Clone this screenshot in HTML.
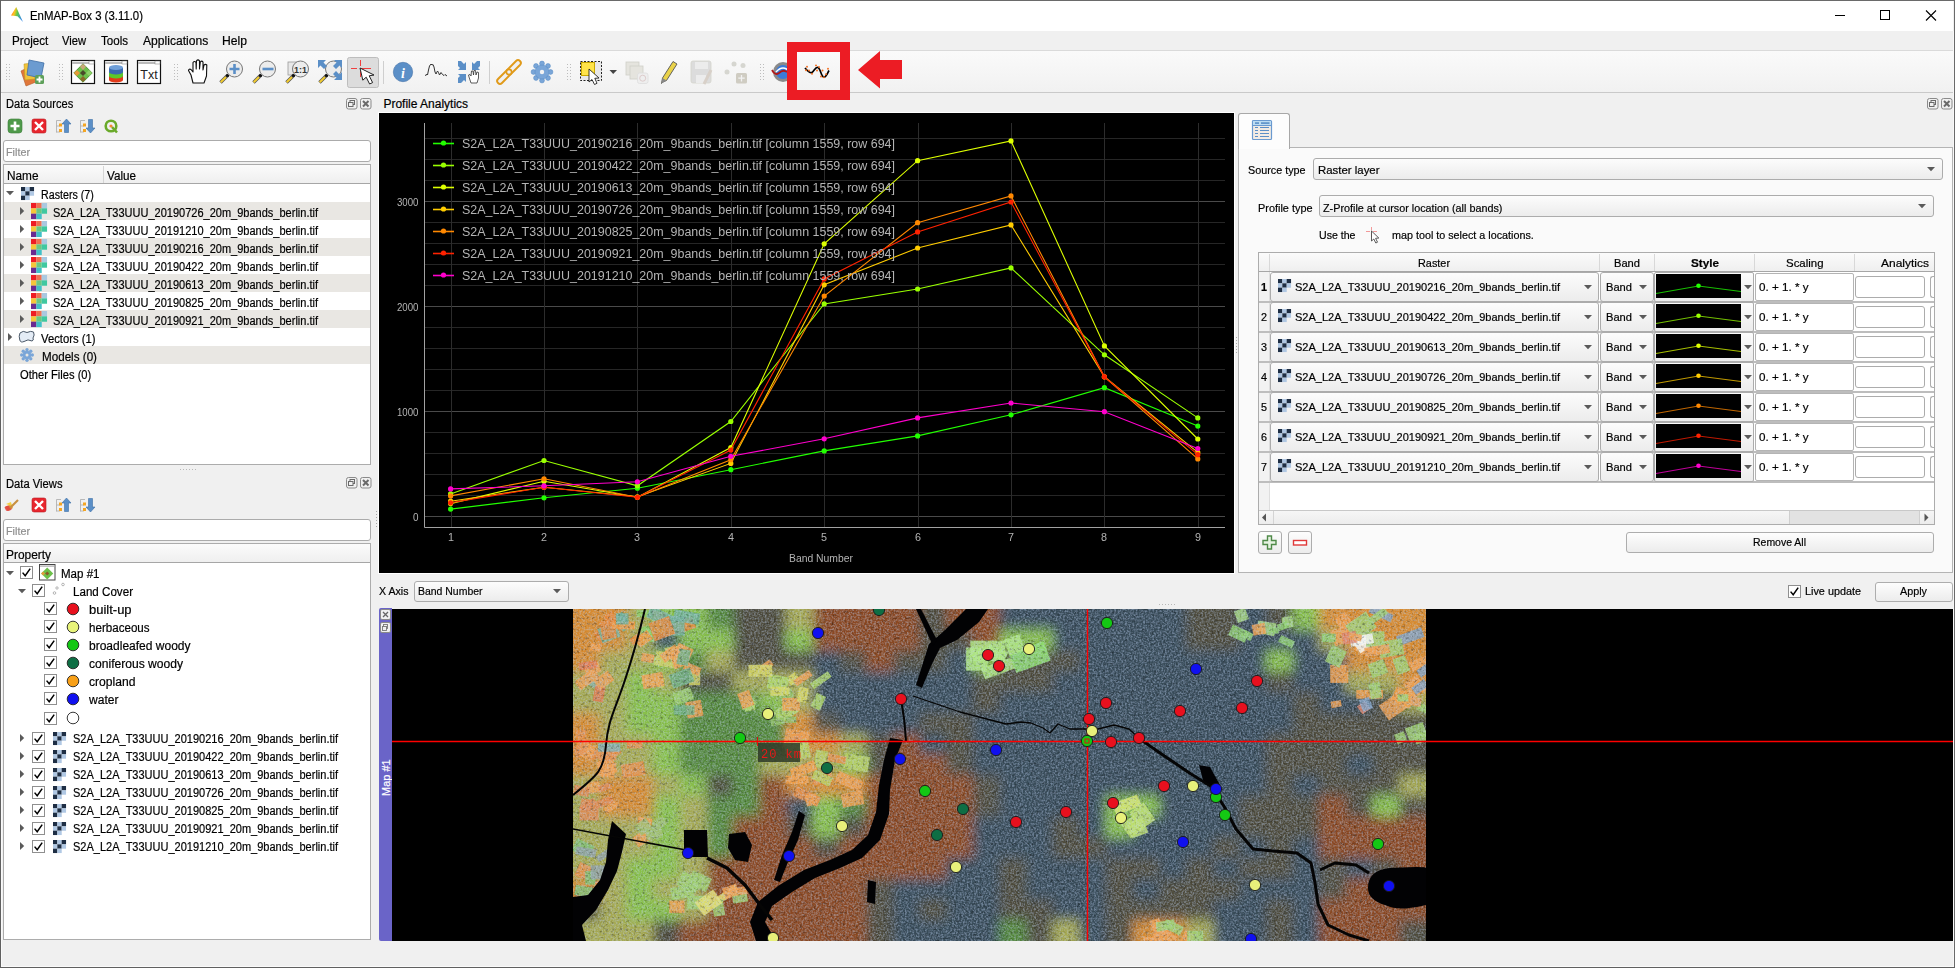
<!DOCTYPE html><html><head><meta charset="utf-8"><title>EnMAP-Box</title><style>
*{box-sizing:border-box}
html,body{margin:0;padding:0}
body{width:1955px;height:968px;overflow:hidden;position:relative;background:#f0f0f0;font-family:"Liberation Sans",sans-serif;font-size:12px;color:#000}
.a{position:absolute}
.t{position:absolute;white-space:nowrap;line-height:1;transform-origin:0 0;-webkit-text-stroke:0.2px currentColor}
svg{position:absolute;overflow:visible}
</style></head><body><div class="a" style="left:0px;top:0px;width:1955px;height:1px;background:#6a6a6a;"></div><div class="a" style="left:0px;top:0px;width:1px;height:968px;background:#606060;"></div><div class="a" style="left:1px;top:1px;width:1px;height:966px;background:#fafafa;"></div><div class="a" style="left:1954px;top:0px;width:1px;height:968px;background:#6a6a6a;"></div><div class="a" style="left:1953px;top:31px;width:1px;height:936px;background:#f8f8f8;"></div><div class="a" style="left:0px;top:967px;width:1955px;height:1px;background:#606060;"></div><div class="a" style="left:1px;top:966px;width:1953px;height:1px;background:#fafafa;"></div><div class="a" style="left:1px;top:1px;width:1952px;height:30px;background:#ffffff;"></div><svg class="a" style="left:0;top:0" width="40" height="32" viewBox="0 0 40 32"><defs><linearGradient id="lg0" x1="0" y1="0" x2="1" y2="0.3"><stop offset="0" stop-color="#ff5a1e"/><stop offset="0.35" stop-color="#ffc21e"/><stop offset="0.6" stop-color="#5cc84a"/><stop offset="1" stop-color="#3a8ee6"/></linearGradient></defs><path d="M16.2 7 L11 15.4 L17.5 16.2 L23 22 Z" fill="url(#lg0)"/></svg><div class="t" style="left:30.00px;top:10.04px;font-size:12px;color:#000;font-weight:normal;;transform:scaleX(0.9482)">EnMAP-Box 3 (3.11.0)</div><div class="a" style="left:1835px;top:15px;width:10px;height:1px;background:#000;"></div><svg class="a" style="left:0;top:0" width="1955" height="32"><rect x="1880.5" y="10.5" width="9" height="9" fill="none" stroke="#000" stroke-width="1"/><path d="M1926 10.5 L1936 20.5 M1936 10.5 L1926 20.5" stroke="#000" stroke-width="1.1"/></svg><div class="a" style="left:1px;top:31px;width:1952px;height:19px;background:#f0f0f0;"></div><div class="t" style="left:11.50px;top:35.44px;font-size:12px;color:#000;font-weight:normal;;transform:scaleX(0.9716)">Project</div><div class="t" style="left:62.00px;top:35.44px;font-size:12px;color:#000;font-weight:normal;;transform:scaleX(0.9303)">View</div><div class="t" style="left:101.00px;top:35.44px;font-size:12px;color:#000;font-weight:normal;;transform:scaleX(0.9637)">Tools</div><div class="t" style="left:142.50px;top:35.44px;font-size:12px;color:#000;font-weight:normal;;transform:scaleX(1.0074)">Applications</div><div class="t" style="left:221.50px;top:35.44px;font-size:12px;color:#000;font-weight:normal;;transform:scaleX(1.0127)">Help</div><div class="a" style="left:1px;top:50px;width:1952px;height:1px;background:#dadada;"></div><div class="a" style="left:1px;top:51px;width:1952px;height:41px;background:linear-gradient(#fafafa,#f1f1f1)"></div><div class="a" style="left:1px;top:92px;width:1952px;height:1px;background:#c9c9c9;"></div><svg class="a" style="left:0;top:0" width="960" height="110" viewBox="0 0 960 110"><rect x="6.0" y="64" width="1" height="1" fill="#bdbdbd"/><rect x="6.0" y="67" width="1" height="1" fill="#bdbdbd"/><rect x="6.0" y="70" width="1" height="1" fill="#bdbdbd"/><rect x="6.0" y="73" width="1" height="1" fill="#bdbdbd"/><rect x="6.0" y="76" width="1" height="1" fill="#bdbdbd"/><rect x="6.0" y="79" width="1" height="1" fill="#bdbdbd"/><rect x="9.0" y="64" width="1" height="1" fill="#bdbdbd"/><rect x="9.0" y="67" width="1" height="1" fill="#bdbdbd"/><rect x="9.0" y="70" width="1" height="1" fill="#bdbdbd"/><rect x="9.0" y="73" width="1" height="1" fill="#bdbdbd"/><rect x="9.0" y="76" width="1" height="1" fill="#bdbdbd"/><rect x="9.0" y="79" width="1" height="1" fill="#bdbdbd"/><rect x="59.0" y="64" width="1" height="1" fill="#bdbdbd"/><rect x="59.0" y="67" width="1" height="1" fill="#bdbdbd"/><rect x="59.0" y="70" width="1" height="1" fill="#bdbdbd"/><rect x="59.0" y="73" width="1" height="1" fill="#bdbdbd"/><rect x="59.0" y="76" width="1" height="1" fill="#bdbdbd"/><rect x="59.0" y="79" width="1" height="1" fill="#bdbdbd"/><rect x="62.0" y="64" width="1" height="1" fill="#bdbdbd"/><rect x="62.0" y="67" width="1" height="1" fill="#bdbdbd"/><rect x="62.0" y="70" width="1" height="1" fill="#bdbdbd"/><rect x="62.0" y="73" width="1" height="1" fill="#bdbdbd"/><rect x="62.0" y="76" width="1" height="1" fill="#bdbdbd"/><rect x="62.0" y="79" width="1" height="1" fill="#bdbdbd"/><rect x="174.0" y="64" width="1" height="1" fill="#bdbdbd"/><rect x="174.0" y="67" width="1" height="1" fill="#bdbdbd"/><rect x="174.0" y="70" width="1" height="1" fill="#bdbdbd"/><rect x="174.0" y="73" width="1" height="1" fill="#bdbdbd"/><rect x="174.0" y="76" width="1" height="1" fill="#bdbdbd"/><rect x="174.0" y="79" width="1" height="1" fill="#bdbdbd"/><rect x="177.0" y="64" width="1" height="1" fill="#bdbdbd"/><rect x="177.0" y="67" width="1" height="1" fill="#bdbdbd"/><rect x="177.0" y="70" width="1" height="1" fill="#bdbdbd"/><rect x="177.0" y="73" width="1" height="1" fill="#bdbdbd"/><rect x="177.0" y="76" width="1" height="1" fill="#bdbdbd"/><rect x="177.0" y="79" width="1" height="1" fill="#bdbdbd"/><rect x="567.0" y="64" width="1" height="1" fill="#bdbdbd"/><rect x="567.0" y="67" width="1" height="1" fill="#bdbdbd"/><rect x="567.0" y="70" width="1" height="1" fill="#bdbdbd"/><rect x="567.0" y="73" width="1" height="1" fill="#bdbdbd"/><rect x="567.0" y="76" width="1" height="1" fill="#bdbdbd"/><rect x="567.0" y="79" width="1" height="1" fill="#bdbdbd"/><rect x="570.0" y="64" width="1" height="1" fill="#bdbdbd"/><rect x="570.0" y="67" width="1" height="1" fill="#bdbdbd"/><rect x="570.0" y="70" width="1" height="1" fill="#bdbdbd"/><rect x="570.0" y="73" width="1" height="1" fill="#bdbdbd"/><rect x="570.0" y="76" width="1" height="1" fill="#bdbdbd"/><rect x="570.0" y="79" width="1" height="1" fill="#bdbdbd"/><rect x="760.0" y="64" width="1" height="1" fill="#bdbdbd"/><rect x="760.0" y="67" width="1" height="1" fill="#bdbdbd"/><rect x="760.0" y="70" width="1" height="1" fill="#bdbdbd"/><rect x="760.0" y="73" width="1" height="1" fill="#bdbdbd"/><rect x="760.0" y="76" width="1" height="1" fill="#bdbdbd"/><rect x="760.0" y="79" width="1" height="1" fill="#bdbdbd"/><rect x="763.0" y="64" width="1" height="1" fill="#bdbdbd"/><rect x="763.0" y="67" width="1" height="1" fill="#bdbdbd"/><rect x="763.0" y="70" width="1" height="1" fill="#bdbdbd"/><rect x="763.0" y="73" width="1" height="1" fill="#bdbdbd"/><rect x="763.0" y="76" width="1" height="1" fill="#bdbdbd"/><rect x="763.0" y="79" width="1" height="1" fill="#bdbdbd"/><g><path d="M21 71 L31 66 L36 82 L26 86 Z" fill="#e0773a" stroke="#b25a28" stroke-width="0.6"/><path d="M24 64 L34 63 L35 79 L25 80 Z" fill="#f2c43a" stroke="#c09a20" stroke-width="0.6"/><path d="M29 60 L44 63 L41 78 L27 75 Z" fill="#6b9bd0" stroke="#3f6fa6" stroke-width="0.8"/><rect x="35" y="75" width="9" height="9" rx="1.5" fill="#5ea05a"/><path d="M39.5 76.5 V82.5 M36.5 79.5 H42.5" stroke="#fff" stroke-width="1.8"/></g><rect x="71.5" y="60.5" width="23" height="23" fill="#fff" stroke="#111" stroke-width="1.2"/><rect x="72" y="62" width="22" height="2" fill="#bbb"/><rect x="89" y="61" width="5" height="3" fill="#fff" stroke="#777" stroke-width="0.5"/><g transform="translate(83 73) rotate(45)"><rect x="-6.5" y="-6.5" width="13" height="13" fill="#6cc04a" stroke="#3e8a2a" stroke-width="0.8"/><rect x="-6.5" y="-6.5" width="4.3" height="4.3" fill="#c8a878"/><rect x="-2.2" y="-2.2" width="4.3" height="4.3" fill="#4a4a2a"/><rect x="2.1" y="2.1" width="4.3" height="4.3" fill="#8a6a2a"/><rect x="-6.5" y="2.1" width="4.3" height="4.3" fill="#e59b3a"/><rect x="2.1" y="-6.5" width="4.3" height="4.3" fill="#8fd06a"/></g><rect x="104.5" y="60.5" width="23" height="23" fill="#fff" stroke="#111" stroke-width="1.2"/><rect x="105" y="62" width="22" height="2" fill="#bbb"/><rect x="122" y="61" width="5" height="3" fill="#fff" stroke="#777" stroke-width="0.5"/><ellipse cx="116" cy="80" rx="7" ry="2.5" fill="#e23a1a"/><rect x="109" y="76" width="14" height="4" fill="#e23a1a"/><ellipse cx="116" cy="76" rx="7" ry="2.5" fill="#5cc82a"/><rect x="109" y="72" width="14" height="4" fill="#5cc82a"/><ellipse cx="116" cy="72" rx="7" ry="2.5" fill="#3a6ab0"/><rect x="109" y="68" width="14" height="4" fill="#3a6ab0"/><ellipse cx="116" cy="67.5" rx="7" ry="2.5" fill="#6f9fd8"/><rect x="137.5" y="60.5" width="23" height="23" fill="#fff" stroke="#111" stroke-width="1.2"/><rect x="138" y="62" width="22" height="2" fill="#bbb"/><rect x="155" y="61" width="5" height="3" fill="#fff" stroke="#777" stroke-width="0.5"/><text x="149" y="79" font-family="Liberation Sans" font-size="12.5" text-anchor="middle" fill="#222">Txt</text><path d="M193 83 L191 75 L188.5 70.5 Q189 68.5 191 69.5 L193 72 L193 62.5 Q194.5 60.5 196 62.5 L196.2 69 L196.5 60.8 Q198 59 199.5 60.8 L199.5 69 L200.3 62 Q201.8 60.3 203 62 L203 70 L204 65 Q205.5 63.8 206.8 65 L206.5 76 L204 83 Z" fill="#fff" stroke="#111" stroke-width="1.1" stroke-linejoin="round"/><path d="M220.5 82.5 L228 75" stroke="#555" stroke-width="3.4" stroke-linecap="butt"/><path d="M220.7 82.3 L226 77" stroke="#f2cc30" stroke-width="2" stroke-linecap="butt"/><circle cx="227.5" cy="75.5" r="1.6" fill="#111"/><circle cx="234.5" cy="69" r="8" fill="#ececec" stroke="#777" stroke-width="1"/><path d="M234.5 3 V13 M229.5 8 H239.5" transform="translate(0 61)" stroke="#5b8fc7" stroke-width="2.6"/><path d="M253.5 82.5 L261 75" stroke="#555" stroke-width="3.4" stroke-linecap="butt"/><path d="M253.7 82.3 L259 77" stroke="#f2cc30" stroke-width="2" stroke-linecap="butt"/><circle cx="260.5" cy="75.5" r="1.6" fill="#111"/><circle cx="267.5" cy="69" r="8" fill="#ececec" stroke="#777" stroke-width="1"/><path d="M262.5 69 H273.5" stroke="#5b8fc7" stroke-width="2.6"/><rect x="288" y="62" width="10" height="13" fill="#e8e8e8" stroke="#999" stroke-width="0.8"/><path d="M286.5 82.5 L294 75" stroke="#555" stroke-width="3.4" stroke-linecap="butt"/><path d="M286.7 82.3 L292 77" stroke="#f2cc30" stroke-width="2" stroke-linecap="butt"/><circle cx="293.5" cy="75.5" r="1.6" fill="#111"/><circle cx="300.5" cy="69" r="8" fill="#ececec" stroke="#777" stroke-width="1"/><text x="300.5" y="72.8" font-family="Liberation Sans" font-weight="bold" font-size="9" text-anchor="middle" fill="#333">1:1</text><path d="M319.5 82.5 L327 75" stroke="#555" stroke-width="3.4" stroke-linecap="butt"/><path d="M319.7 82.3 L325 77" stroke="#f2cc30" stroke-width="2" stroke-linecap="butt"/><circle cx="326.5" cy="75.5" r="1.6" fill="#111"/><circle cx="333.5" cy="69" r="8" fill="#ececec" stroke="#777" stroke-width="1"/><path d="M318 60 H326 L323.5 62.5 L327 66 L324 69 L320.5 65.5 L318 68 Z" fill="#5b8fc7"/><path d="M342 60 H334 L336.5 62.5 L333 66 L336 69 L339.5 65.5 L342 68 Z" fill="#5b8fc7"/><path d="M342 80 H334 L336.5 77.5 L333 74 L336 71 L339.5 74.5 L342 72 Z" fill="#5b8fc7"/><rect x="347.5" y="57.5" width="31" height="30" rx="2" fill="#dcdcdc" stroke="#bdbdbd" stroke-width="1"/><path d="M351 68.5 H357 M360 68.5 H371 M360.5 60 V66 M360.5 71 V77" stroke="#f04040" stroke-width="1"/><path d="M360 68 L362.8 80.2 L366.2 77.2 L369.6 84 L372.6 82.6 L369.2 75.8 L374 75 Z" fill="#fff" stroke="#222" stroke-width="1" stroke-linejoin="round"/><rect x="383" y="61" width="1" height="23" fill="#cfcfcf"/><rect x="489" y="61" width="1" height="23" fill="#cfcfcf"/><circle cx="403" cy="72" r="9.7" fill="#5b8fc7" stroke="#4572a8" stroke-width="0.6"/><text x="403" y="77.5" font-family="Liberation Serif" font-style="italic" font-weight="bold" font-size="14" text-anchor="middle" fill="#fff">i</text><path d="M425.5 76 L426.5 74 L427.5 75 L428.5 70 L429.5 66 L431 64 L432 65 L433 64.5 L434 67 L435 72 L436 74 L437.5 71 L438.5 72.5 L439.5 75 L441 72.5 L442.5 74.5 L444 75.5 L445 74.5 L447 76" fill="none" stroke="#333" stroke-width="1"/><path d="M458 61 L461 61 L464 64 L466 62 L466 70 L458 70 L460 68 L458 66 Z" fill="#5b8fc7"/><path d="M480 61 L477 61 L474 64 L472 62 L472 70 L480 70 L478 68 L480 66 Z" fill="#5b8fc7"/><path d="M458 83 L461 83 L464 80 L466 82 L466 74 L458 74 L460 76 L458 78 Z" fill="#5b8fc7"/><path d="M471 83 L469 77 L468.5 75 L470 74.5 L471 76 L471.5 71 L473 71 L473.5 75 L474 70.5 L475.5 70.5 L476 75 L477 72 L478.5 72.5 L478.5 78 L477 83 Z" fill="#fff" stroke="#333" stroke-width="0.8"/><path d="M500 81 L518 63" stroke="#e09a1a" stroke-width="7.5" stroke-linecap="round"/><path d="M500 81 L518 63" stroke="#f1f1f1" stroke-width="3.6" stroke-linecap="round"/><circle cx="509" cy="72" r="2.6" fill="#f1f1f1" stroke="#e09a1a" stroke-width="1.6"/><circle cx="550.50" cy="72.00" r="2.4" fill="#7aa6d8" stroke="#5b8fc7" stroke-width="0.6"/><circle cx="548.01" cy="78.01" r="2.4" fill="#7aa6d8" stroke="#5b8fc7" stroke-width="0.6"/><circle cx="542.00" cy="80.50" r="2.4" fill="#7aa6d8" stroke="#5b8fc7" stroke-width="0.6"/><circle cx="535.99" cy="78.01" r="2.4" fill="#7aa6d8" stroke="#5b8fc7" stroke-width="0.6"/><circle cx="533.50" cy="72.00" r="2.4" fill="#7aa6d8" stroke="#5b8fc7" stroke-width="0.6"/><circle cx="535.99" cy="65.99" r="2.4" fill="#7aa6d8" stroke="#5b8fc7" stroke-width="0.6"/><circle cx="542.00" cy="63.50" r="2.4" fill="#7aa6d8" stroke="#5b8fc7" stroke-width="0.6"/><circle cx="548.01" cy="65.99" r="2.4" fill="#7aa6d8" stroke="#5b8fc7" stroke-width="0.6"/><circle cx="542" cy="72" r="7" fill="#7aa6d8" stroke="#5b8fc7" stroke-width="0.6"/><circle cx="542" cy="72" r="2.2" fill="#f3f3f3"/><rect x="580.5" y="61.5" width="21" height="19" fill="#e8e8e8" stroke="#222" stroke-width="1" stroke-dasharray="2 1.5"/><rect x="581.5" y="62.5" width="13" height="13" fill="#ffe44a" stroke="#c9a800" stroke-width="1"/><path d="M589 69 L589 82 L592 79.5 L594.5 84.5 L597 83.3 L594.8 78.3 L599 78 Z" fill="#fff" stroke="#222" stroke-width="0.9" stroke-linejoin="round"/><path d="M609.5 70 H617 L613.2 74 Z" fill="#444"/><rect x="626" y="62" width="13" height="13" fill="#e5e4de" stroke="#cfcfc8" stroke-width="0.8"/><rect x="630" y="66" width="13" height="13" fill="#e5e4de" stroke="#cfcfc8" stroke-width="0.8"/><rect x="637.5" y="73" width="10.5" height="10.5" rx="2" fill="#eee" stroke="#ddd" stroke-width="0.8"/><circle cx="642.7" cy="78.2" r="3" fill="none" stroke="#dcc" stroke-width="1"/><path d="M663 82 L661.5 83.5 L662.5 78 L673 61.5 L677 64 L666.5 80.5 Z" fill="#e9d24a" stroke="#555" stroke-width="0.9" stroke-linejoin="round"/><path d="M661.5 83.5 L662.5 78 L666.5 80.5 Z" fill="#888"/><rect x="691" y="61" width="20" height="22" rx="2" fill="#dcdcdc" stroke="#d4d4cc" stroke-width="0.8"/><rect x="695" y="62" width="13" height="7" fill="#ececec"/><rect x="696" y="75" width="10" height="8" fill="#ececec"/><path d="M704 84 L711 70" stroke="#d8d0c8" stroke-width="3"/><circle cx="734" cy="64" r="2.5" fill="#d6d6d0"/><circle cx="743" cy="65.5" r="2.5" fill="#d6d6d0"/><circle cx="727" cy="72" r="2.5" fill="#d6d6d0"/><rect x="736" y="73" width="11" height="10.5" rx="1.5" fill="#cfccc2"/><path d="M741.5 75 V81.5 M738.3 78.2 H744.7" stroke="#f2f2f2" stroke-width="1.3"/><circle cx="783" cy="72" r="10" fill="#8a8a8a"/><circle cx="783" cy="72" r="7" fill="#3a7ad8"/><path d="M776 72 Q783 64 790 72" stroke="#fff" stroke-width="1.5" fill="none"/><path d="M772 70 Q775 76 779 73 Q783 69 787 72" stroke="#b01818" stroke-width="1.8" fill="none"/><rect x="792" y="47" width="53" height="48" fill="none" stroke="#ec1c24" stroke-width="10"/><path d="M805 68 C808 71.5 810 73.5 812 72.5 S815.5 66.5 818 67.5 S821 76 823.5 77 S827.5 73 829 70.5" fill="none" stroke="#000" stroke-width="1.7"/><circle cx="807" cy="66.8" r="0.95" fill="#f26a1a"/><circle cx="809" cy="70.5" r="0.95" fill="#f26a1a"/><circle cx="812" cy="73.8" r="0.95" fill="#f26a1a"/><circle cx="816" cy="65.4" r="0.95" fill="#f26a1a"/><circle cx="819" cy="67" r="0.95" fill="#f26a1a"/><circle cx="817" cy="70.5" r="0.95" fill="#f26a1a"/><circle cx="822.5" cy="70.5" r="0.95" fill="#f26a1a"/><circle cx="824" cy="77.2" r="0.95" fill="#f26a1a"/><circle cx="826" cy="74.2" r="0.95" fill="#f26a1a"/><circle cx="828" cy="68.7" r="0.95" fill="#f26a1a"/><circle cx="821" cy="76.5" r="0.95" fill="#f26a1a"/><circle cx="806" cy="70.2" r="0.95" fill="#f26a1a"/><path d="M858 70 L880 51 L880 60 L902 60 L902 79 L880 79 L880 88.6 Z" fill="#ec1c24"/></svg><div class="t" style="left:5.50px;top:98.44px;font-size:12px;color:#000;font-weight:normal;;transform:scaleX(0.9243)">Data Sources</div><svg class="a" style="left:346px;top:98px" width="26" height="12" viewBox="0 0 26 12"><rect x="0.5" y="0.5" width="10.5" height="10.5" rx="2" fill="none" stroke="#8a8a8a" stroke-width="1"/><rect x="4" y="2.5" width="4.5" height="4" fill="none" stroke="#6a6a6a" stroke-width="1"/><rect x="2.5" y="4.5" width="4.5" height="4" fill="#f0f0f0" stroke="#6a6a6a" stroke-width="1"/><rect x="14.5" y="0.5" width="10.5" height="10.5" rx="2" fill="none" stroke="#8a8a8a" stroke-width="1"/><path d="M17 3 L22.5 8.5 M22.5 3 L17 8.5" stroke="#6a6a6a" stroke-width="2"/></svg><svg class="a" style="left:0;top:119px" width="130" height="16" viewBox="0 0 130 16"><rect x="8" y="0" width="14" height="14" rx="3" fill="#4f9a4a" stroke="#3d7d3a" stroke-width="0.6"/><path d="M15 2.5 V11.5 M10.5 7 H19.5" stroke="#fff" stroke-width="2.6"/><rect x="32" y="0" width="14" height="14" rx="2" fill="#e8262e" stroke="#b81a20" stroke-width="0.6"/><path d="M35 3 L43 11 M43 3 L35 11" stroke="#fff" stroke-width="2.4"/><path d="M56.5 1.5 H61 M56.5 1.5 V13.5 M56.5 7 H60 M56.5 13 H60" stroke="#aaa" stroke-width="0.8" fill="none"/><rect x="59" y="4.5" width="3" height="3" fill="#f5a623"/><rect x="59" y="10" width="3" height="3" fill="#f5a623"/><path d="M66.5 0 L71 5 H68.5 V13.5 H64.5 V5 H62 Z" fill="#5b8fc7" stroke="#3d6fa6" stroke-width="0.6"/><path d="M80.5 1.5 H85 M80.5 1.5 V13.5 M80.5 7 H84 M80.5 13 H84" stroke="#aaa" stroke-width="0.8" fill="none"/><rect x="83" y="4.5" width="3" height="3" fill="#f5a623"/><rect x="83" y="10" width="3" height="3" fill="#f5a623"/><path d="M90.5 14 L95 9 H92.5 V0.5 H88.5 V9 H86 Z" fill="#5b8fc7" stroke="#3d6fa6" stroke-width="0.6"/><circle cx="111" cy="7" r="5.3" fill="none" stroke="#6aaa2a" stroke-width="2.6"/><path d="M112 8 L117 13.5" stroke="#6aaa2a" stroke-width="2.6"/><circle cx="111" cy="7" r="1.6" fill="#f08a30"/></svg><div class="a" style="left:3px;top:140px;width:368px;height:22px;background:#fff;border:1px solid #ababab;border-radius:3px"></div><div class="t" style="left:5.50px;top:147.19px;font-size:11px;color:#8f8f8f;font-weight:normal;;transform:scaleX(0.9815)">Filter</div><div class="a" style="left:3px;top:164px;width:368px;height:301px;background:#fff;border:1px solid #acacac"></div><div class="a" style="left:4px;top:165px;width:366px;height:19px;background:linear-gradient(#fbfbfb,#efefef);border-bottom:1px solid #a6a6a6"></div><div class="a" style="left:103px;top:166px;width:1px;height:17px;background:#d5d5d5;"></div><div class="t" style="left:6.60px;top:169.84px;font-size:12px;color:#000;font-weight:normal;;transform:scaleX(0.9839)">Name</div><div class="t" style="left:106.50px;top:169.84px;font-size:12px;color:#000;font-weight:normal;;transform:scaleX(0.9727)">Value</div><svg class="a" style="left:6px;top:190.8px" width="9" height="6"><path d="M0 0 H8 L4 4.2 Z" fill="#5a5a5a"/></svg><svg class="a" style="left:21px;top:187px" width="13" height="13"><rect x="0.00" y="0.00" width="4.38" height="4.38" fill="#1e2e44"/><rect x="4.33" y="0.00" width="4.38" height="4.38" fill="#b0c8e4"/><rect x="8.67" y="0.00" width="4.38" height="4.38" fill="#1e2e44"/><rect x="0.00" y="4.33" width="4.38" height="4.38" fill="#b0c8e4"/><rect x="4.33" y="4.33" width="4.38" height="4.38" fill="#1e2e44"/><rect x="8.67" y="4.33" width="4.38" height="4.38" fill="#b0c8e4"/><rect x="0.00" y="8.67" width="4.38" height="4.38" fill="#1e2e44"/><rect x="4.33" y="8.67" width="4.38" height="4.38" fill="#b0c8e4"/></svg><div class="t" style="left:41.20px;top:189.14px;font-size:12px;color:#000;font-weight:normal;;transform:scaleX(0.8897)">Rasters (7)</div><div class="a" style="left:4px;top:202px;width:366px;height:18px;background:#e9e7e3;"></div><svg class="a" style="left:20px;top:207.3px" width="6" height="9"><path d="M0 0 V8 L4.2 4 Z" fill="#5a5a5a"/></svg><svg class="a" style="left:31px;top:203.2px" width="16" height="16"><rect x="0.00" y="0.00" width="5.4" height="5.4" fill="#ee1c24"/><rect x="5.33" y="0.00" width="5.4" height="5.4" fill="#f07050"/><rect x="10.66" y="0.00" width="5.4" height="5.4" fill="#aac8e0"/><rect x="0.00" y="5.33" width="5.4" height="5.4" fill="#f5c63a"/><rect x="5.33" y="5.33" width="5.4" height="5.4" fill="#6cc880"/><rect x="10.66" y="5.33" width="5.4" height="5.4" fill="#40c8a0"/><rect x="0.00" y="10.66" width="5.4" height="5.4" fill="#6a2a90"/><rect x="5.33" y="10.66" width="5.4" height="5.4" fill="#40c0c8"/></svg><div class="t" style="left:53.30px;top:207.14px;font-size:12px;color:#000;font-weight:normal;;transform:scaleX(0.9174)">S2A_L2A_T33UUU_20190726_20m_9bands_berlin.tif</div><svg class="a" style="left:20px;top:225.3px" width="6" height="9"><path d="M0 0 V8 L4.2 4 Z" fill="#5a5a5a"/></svg><svg class="a" style="left:31px;top:221.2px" width="16" height="16"><rect x="0.00" y="0.00" width="5.4" height="5.4" fill="#ee1c24"/><rect x="5.33" y="0.00" width="5.4" height="5.4" fill="#f07050"/><rect x="10.66" y="0.00" width="5.4" height="5.4" fill="#aac8e0"/><rect x="0.00" y="5.33" width="5.4" height="5.4" fill="#f5c63a"/><rect x="5.33" y="5.33" width="5.4" height="5.4" fill="#6cc880"/><rect x="10.66" y="5.33" width="5.4" height="5.4" fill="#40c8a0"/><rect x="0.00" y="10.66" width="5.4" height="5.4" fill="#6a2a90"/><rect x="5.33" y="10.66" width="5.4" height="5.4" fill="#40c0c8"/></svg><div class="t" style="left:53.30px;top:225.14px;font-size:12px;color:#000;font-weight:normal;;transform:scaleX(0.9174)">S2A_L2A_T33UUU_20191210_20m_9bands_berlin.tif</div><div class="a" style="left:4px;top:238px;width:366px;height:18px;background:#e9e7e3;"></div><svg class="a" style="left:20px;top:243.3px" width="6" height="9"><path d="M0 0 V8 L4.2 4 Z" fill="#5a5a5a"/></svg><svg class="a" style="left:31px;top:239.2px" width="16" height="16"><rect x="0.00" y="0.00" width="5.4" height="5.4" fill="#ee1c24"/><rect x="5.33" y="0.00" width="5.4" height="5.4" fill="#f07050"/><rect x="10.66" y="0.00" width="5.4" height="5.4" fill="#aac8e0"/><rect x="0.00" y="5.33" width="5.4" height="5.4" fill="#f5c63a"/><rect x="5.33" y="5.33" width="5.4" height="5.4" fill="#6cc880"/><rect x="10.66" y="5.33" width="5.4" height="5.4" fill="#40c8a0"/><rect x="0.00" y="10.66" width="5.4" height="5.4" fill="#6a2a90"/><rect x="5.33" y="10.66" width="5.4" height="5.4" fill="#40c0c8"/></svg><div class="t" style="left:53.30px;top:243.14px;font-size:12px;color:#000;font-weight:normal;;transform:scaleX(0.9174)">S2A_L2A_T33UUU_20190216_20m_9bands_berlin.tif</div><svg class="a" style="left:20px;top:261.3px" width="6" height="9"><path d="M0 0 V8 L4.2 4 Z" fill="#5a5a5a"/></svg><svg class="a" style="left:31px;top:257.2px" width="16" height="16"><rect x="0.00" y="0.00" width="5.4" height="5.4" fill="#ee1c24"/><rect x="5.33" y="0.00" width="5.4" height="5.4" fill="#f07050"/><rect x="10.66" y="0.00" width="5.4" height="5.4" fill="#aac8e0"/><rect x="0.00" y="5.33" width="5.4" height="5.4" fill="#f5c63a"/><rect x="5.33" y="5.33" width="5.4" height="5.4" fill="#6cc880"/><rect x="10.66" y="5.33" width="5.4" height="5.4" fill="#40c8a0"/><rect x="0.00" y="10.66" width="5.4" height="5.4" fill="#6a2a90"/><rect x="5.33" y="10.66" width="5.4" height="5.4" fill="#40c0c8"/></svg><div class="t" style="left:53.30px;top:261.14px;font-size:12px;color:#000;font-weight:normal;;transform:scaleX(0.9174)">S2A_L2A_T33UUU_20190422_20m_9bands_berlin.tif</div><div class="a" style="left:4px;top:274px;width:366px;height:18px;background:#e9e7e3;"></div><svg class="a" style="left:20px;top:279.3px" width="6" height="9"><path d="M0 0 V8 L4.2 4 Z" fill="#5a5a5a"/></svg><svg class="a" style="left:31px;top:275.2px" width="16" height="16"><rect x="0.00" y="0.00" width="5.4" height="5.4" fill="#ee1c24"/><rect x="5.33" y="0.00" width="5.4" height="5.4" fill="#f07050"/><rect x="10.66" y="0.00" width="5.4" height="5.4" fill="#aac8e0"/><rect x="0.00" y="5.33" width="5.4" height="5.4" fill="#f5c63a"/><rect x="5.33" y="5.33" width="5.4" height="5.4" fill="#6cc880"/><rect x="10.66" y="5.33" width="5.4" height="5.4" fill="#40c8a0"/><rect x="0.00" y="10.66" width="5.4" height="5.4" fill="#6a2a90"/><rect x="5.33" y="10.66" width="5.4" height="5.4" fill="#40c0c8"/></svg><div class="t" style="left:53.30px;top:279.14px;font-size:12px;color:#000;font-weight:normal;;transform:scaleX(0.9174)">S2A_L2A_T33UUU_20190613_20m_9bands_berlin.tif</div><svg class="a" style="left:20px;top:297.3px" width="6" height="9"><path d="M0 0 V8 L4.2 4 Z" fill="#5a5a5a"/></svg><svg class="a" style="left:31px;top:293.2px" width="16" height="16"><rect x="0.00" y="0.00" width="5.4" height="5.4" fill="#ee1c24"/><rect x="5.33" y="0.00" width="5.4" height="5.4" fill="#f07050"/><rect x="10.66" y="0.00" width="5.4" height="5.4" fill="#aac8e0"/><rect x="0.00" y="5.33" width="5.4" height="5.4" fill="#f5c63a"/><rect x="5.33" y="5.33" width="5.4" height="5.4" fill="#6cc880"/><rect x="10.66" y="5.33" width="5.4" height="5.4" fill="#40c8a0"/><rect x="0.00" y="10.66" width="5.4" height="5.4" fill="#6a2a90"/><rect x="5.33" y="10.66" width="5.4" height="5.4" fill="#40c0c8"/></svg><div class="t" style="left:53.30px;top:297.14px;font-size:12px;color:#000;font-weight:normal;;transform:scaleX(0.9174)">S2A_L2A_T33UUU_20190825_20m_9bands_berlin.tif</div><div class="a" style="left:4px;top:310px;width:366px;height:18px;background:#e9e7e3;"></div><svg class="a" style="left:20px;top:315.3px" width="6" height="9"><path d="M0 0 V8 L4.2 4 Z" fill="#5a5a5a"/></svg><svg class="a" style="left:31px;top:311.2px" width="16" height="16"><rect x="0.00" y="0.00" width="5.4" height="5.4" fill="#ee1c24"/><rect x="5.33" y="0.00" width="5.4" height="5.4" fill="#f07050"/><rect x="10.66" y="0.00" width="5.4" height="5.4" fill="#aac8e0"/><rect x="0.00" y="5.33" width="5.4" height="5.4" fill="#f5c63a"/><rect x="5.33" y="5.33" width="5.4" height="5.4" fill="#6cc880"/><rect x="10.66" y="5.33" width="5.4" height="5.4" fill="#40c8a0"/><rect x="0.00" y="10.66" width="5.4" height="5.4" fill="#6a2a90"/><rect x="5.33" y="10.66" width="5.4" height="5.4" fill="#40c0c8"/></svg><div class="t" style="left:53.30px;top:315.14px;font-size:12px;color:#000;font-weight:normal;;transform:scaleX(0.9174)">S2A_L2A_T33UUU_20190921_20m_9bands_berlin.tif</div><svg class="a" style="left:8px;top:333.3px" width="6" height="9"><path d="M0 0 V8 L4.2 4 Z" fill="#5a5a5a"/></svg><svg class="a" style="left:18px;top:330px" width="18" height="14"><path d="M2 3 Q5 0 9 2.5 Q13 0.5 15.5 2 Q17 5 15 8 Q16 10.5 14 11 Q10 8.5 6 11.5 Q2.5 13 1.8 10 Q0.5 6 2 3 Z" fill="#e4ecf6" stroke="#4a5868" stroke-width="1"/></svg><div class="t" style="left:41.20px;top:333.14px;font-size:12px;color:#000;font-weight:normal;;transform:scaleX(0.9391)">Vectors (1)</div><div class="a" style="left:4px;top:346px;width:366px;height:18px;background:#e9e7e3;"></div><svg class="a" style="left:20px;top:348px" width="15" height="15"><circle cx="12.30" cy="7.00" r="1.7" fill="#7aa6d8"/><circle cx="10.75" cy="10.75" r="1.7" fill="#7aa6d8"/><circle cx="7.00" cy="12.30" r="1.7" fill="#7aa6d8"/><circle cx="3.25" cy="10.75" r="1.7" fill="#7aa6d8"/><circle cx="1.70" cy="7.00" r="1.7" fill="#7aa6d8"/><circle cx="3.25" cy="3.25" r="1.7" fill="#7aa6d8"/><circle cx="7.00" cy="1.70" r="1.7" fill="#7aa6d8"/><circle cx="10.75" cy="3.25" r="1.7" fill="#7aa6d8"/><circle cx="7" cy="7" r="4.3" fill="#7aa6d8"/><circle cx="7" cy="7" r="1.5" fill="#e9e7e3"/></svg><div class="t" style="left:41.50px;top:351.14px;font-size:12px;color:#000;font-weight:normal;;transform:scaleX(0.9702)">Models (0)</div><div class="t" style="left:19.70px;top:369.14px;font-size:12px;color:#000;font-weight:normal;;transform:scaleX(0.9297)">Other Files (0)</div><svg class="a" style="left:0;top:0" width="380" height="480"><rect x="180" y="469" width="1" height="1" fill="#b8b8b8"/><rect x="183" y="469" width="1" height="1" fill="#b8b8b8"/><rect x="186" y="469" width="1" height="1" fill="#b8b8b8"/><rect x="189" y="469" width="1" height="1" fill="#b8b8b8"/><rect x="192" y="469" width="1" height="1" fill="#b8b8b8"/><rect x="195" y="469" width="1" height="1" fill="#b8b8b8"/></svg><div class="t" style="left:5.50px;top:478.14px;font-size:12px;color:#000;font-weight:normal;;transform:scaleX(0.9341)">Data Views</div><svg class="a" style="left:346px;top:477px" width="26" height="12" viewBox="0 0 26 12"><rect x="0.5" y="0.5" width="10.5" height="10.5" rx="2" fill="none" stroke="#8a8a8a" stroke-width="1"/><rect x="4" y="2.5" width="4.5" height="4" fill="none" stroke="#6a6a6a" stroke-width="1"/><rect x="2.5" y="4.5" width="4.5" height="4" fill="#f0f0f0" stroke="#6a6a6a" stroke-width="1"/><rect x="14.5" y="0.5" width="10.5" height="10.5" rx="2" fill="none" stroke="#8a8a8a" stroke-width="1"/><path d="M17 3 L22.5 8.5 M22.5 3 L17 8.5" stroke="#6a6a6a" stroke-width="2"/></svg><svg class="a" style="left:0;top:498px" width="130" height="16" viewBox="0 0 130 16"><path d="M5 9 L11 6 L13 10 L8 13 Z" fill="#e8a040"/><path d="M4.5 9.5 Q6 7 9 8 L12 11 Q9 14 6 12.5 Z" fill="#e04040" opacity="0.85"/><path d="M6 6 L11 4 L12 8 Z" fill="#f2d040"/><path d="M10 10 L18 2" stroke="#c89040" stroke-width="2.2"/><rect x="32" y="0" width="14" height="14" rx="2" fill="#e8262e" stroke="#b81a20" stroke-width="0.6"/><path d="M35 3 L43 11 M43 3 L35 11" stroke="#fff" stroke-width="2.4"/><path d="M56.5 1.5 H61 M56.5 1.5 V13.5 M56.5 7 H60 M56.5 13 H60" stroke="#aaa" stroke-width="0.8" fill="none"/><rect x="59" y="4.5" width="3" height="3" fill="#f5a623"/><rect x="59" y="10" width="3" height="3" fill="#f5a623"/><path d="M66.5 0 L71 5 H68.5 V13.5 H64.5 V5 H62 Z" fill="#5b8fc7" stroke="#3d6fa6" stroke-width="0.6"/><path d="M80.5 1.5 H85 M80.5 1.5 V13.5 M80.5 7 H84 M80.5 13 H84" stroke="#aaa" stroke-width="0.8" fill="none"/><rect x="83" y="4.5" width="3" height="3" fill="#f5a623"/><rect x="83" y="10" width="3" height="3" fill="#f5a623"/><path d="M90.5 14 L95 9 H92.5 V0.5 H88.5 V9 H86 Z" fill="#5b8fc7" stroke="#3d6fa6" stroke-width="0.6"/></svg><div class="a" style="left:3px;top:519px;width:368px;height:22px;background:#fff;border:1px solid #ababab;border-radius:3px"></div><div class="t" style="left:5.50px;top:526.19px;font-size:11px;color:#8f8f8f;font-weight:normal;;transform:scaleX(0.9815)">Filter</div><div class="a" style="left:3px;top:543px;width:368px;height:397px;background:#fff;border:1px solid #acacac"></div><div class="a" style="left:4px;top:544px;width:366px;height:19px;background:linear-gradient(#fbfbfb,#efefef);border-bottom:1px solid #a6a6a6"></div><div class="t" style="left:6.00px;top:549.34px;font-size:12px;color:#000;font-weight:normal;;transform:scaleX(0.9921)">Property</div><svg class="a" style="left:6px;top:570.5px" width="9" height="6"><path d="M0 0 H8 L4 4.2 Z" fill="#5a5a5a"/></svg><svg class="a" style="left:19.5px;top:566px" width="13" height="13"><rect x="0.5" y="0.5" width="12" height="12" fill="#fff" stroke="#8f8f8f" stroke-width="1"/><path d="M2.6 6.6 L5.2 9.8 L10.2 2.6" fill="none" stroke="#000" stroke-width="1.5"/></svg><svg class="a" style="left:39px;top:564px" width="17" height="17"><rect x="0.5" y="0.5" width="15.5" height="15.5" fill="#fff" stroke="#444" stroke-width="1"/><rect x="1" y="1.5" width="14.5" height="1.2" fill="#aaa"/><g transform="translate(8.2 9.5) rotate(45)"><rect x="-4.3" y="-4.3" width="8.6" height="8.6" fill="#6cc04a"/><rect x="-1.5" y="-1.5" width="3" height="3" fill="#8a5a2a"/><rect x="-4.3" y="1.5" width="2.8" height="2.8" fill="#e59b3a"/></g></svg><div class="t" style="left:61.40px;top:568.14px;font-size:12px;color:#000;font-weight:normal;;transform:scaleX(0.9617)">Map #1</div><svg class="a" style="left:18px;top:588.5px" width="9" height="6"><path d="M0 0 H8 L4 4.2 Z" fill="#5a5a5a"/></svg><svg class="a" style="left:31.5px;top:584px" width="13" height="13"><rect x="0.5" y="0.5" width="12" height="12" fill="#fff" stroke="#8f8f8f" stroke-width="1"/><path d="M2.6 6.6 L5.2 9.8 L10.2 2.6" fill="none" stroke="#000" stroke-width="1.5"/></svg><svg class="a" style="left:52px;top:582px" width="14" height="14"><circle cx="2.5" cy="11" r="1.3" fill="none" stroke="#888" stroke-width="0.6"/><circle cx="5" cy="6" r="1.2" fill="none" stroke="#888" stroke-width="0.6"/><circle cx="11" cy="2.5" r="1.3" fill="none" stroke="#888" stroke-width="0.6"/></svg><div class="t" style="left:73.30px;top:586.14px;font-size:12px;color:#000;font-weight:normal;;transform:scaleX(0.9670)">Land Cover</div><svg class="a" style="left:43.5px;top:602.3000000000001px" width="13" height="13"><rect x="0.5" y="0.5" width="12" height="12" fill="#fff" stroke="#8f8f8f" stroke-width="1"/><path d="M2.6 6.6 L5.2 9.8 L10.2 2.6" fill="none" stroke="#000" stroke-width="1.5"/></svg><svg class="a" style="left:66px;top:601.6px" width="14" height="14"><circle cx="7" cy="7" r="5.8" fill="#e8101e" stroke="#222" stroke-width="0.9"/></svg><div class="t" style="left:89.30px;top:604.04px;font-size:12px;color:#000;font-weight:normal;;transform:scaleX(1.0823)">built-up</div><svg class="a" style="left:43.5px;top:620.3000000000001px" width="13" height="13"><rect x="0.5" y="0.5" width="12" height="12" fill="#fff" stroke="#8f8f8f" stroke-width="1"/><path d="M2.6 6.6 L5.2 9.8 L10.2 2.6" fill="none" stroke="#000" stroke-width="1.5"/></svg><svg class="a" style="left:66px;top:619.6px" width="14" height="14"><circle cx="7" cy="7" r="5.8" fill="#e8f47a" stroke="#222" stroke-width="0.9"/></svg><div class="t" style="left:89.30px;top:622.04px;font-size:12px;color:#000;font-weight:normal;;transform:scaleX(0.9662)">herbaceous</div><svg class="a" style="left:43.5px;top:638.3000000000001px" width="13" height="13"><rect x="0.5" y="0.5" width="12" height="12" fill="#fff" stroke="#8f8f8f" stroke-width="1"/><path d="M2.6 6.6 L5.2 9.8 L10.2 2.6" fill="none" stroke="#000" stroke-width="1.5"/></svg><svg class="a" style="left:66px;top:637.6px" width="14" height="14"><circle cx="7" cy="7" r="5.8" fill="#14c814" stroke="#222" stroke-width="0.9"/></svg><div class="t" style="left:89.30px;top:640.04px;font-size:12px;color:#000;font-weight:normal;;transform:scaleX(1.0008)">broadleafed woody</div><svg class="a" style="left:43.5px;top:656.3000000000001px" width="13" height="13"><rect x="0.5" y="0.5" width="12" height="12" fill="#fff" stroke="#8f8f8f" stroke-width="1"/><path d="M2.6 6.6 L5.2 9.8 L10.2 2.6" fill="none" stroke="#000" stroke-width="1.5"/></svg><svg class="a" style="left:66px;top:655.6px" width="14" height="14"><circle cx="7" cy="7" r="5.8" fill="#0e6e44" stroke="#222" stroke-width="0.9"/></svg><div class="t" style="left:89.30px;top:658.04px;font-size:12px;color:#000;font-weight:normal;;transform:scaleX(1.0065)">coniferous woody</div><svg class="a" style="left:43.5px;top:674.3000000000001px" width="13" height="13"><rect x="0.5" y="0.5" width="12" height="12" fill="#fff" stroke="#8f8f8f" stroke-width="1"/><path d="M2.6 6.6 L5.2 9.8 L10.2 2.6" fill="none" stroke="#000" stroke-width="1.5"/></svg><svg class="a" style="left:66px;top:673.6px" width="14" height="14"><circle cx="7" cy="7" r="5.8" fill="#f8a018" stroke="#222" stroke-width="0.9"/></svg><div class="t" style="left:89.30px;top:676.04px;font-size:12px;color:#000;font-weight:normal;;transform:scaleX(1.0102)">cropland</div><svg class="a" style="left:43.5px;top:692.3000000000001px" width="13" height="13"><rect x="0.5" y="0.5" width="12" height="12" fill="#fff" stroke="#8f8f8f" stroke-width="1"/><path d="M2.6 6.6 L5.2 9.8 L10.2 2.6" fill="none" stroke="#000" stroke-width="1.5"/></svg><svg class="a" style="left:66px;top:691.6px" width="14" height="14"><circle cx="7" cy="7" r="5.8" fill="#1010f0" stroke="#222" stroke-width="0.9"/></svg><div class="t" style="left:89.30px;top:694.04px;font-size:12px;color:#000;font-weight:normal;;transform:scaleX(1.0053)">water</div><svg class="a" style="left:43.5px;top:711.7px" width="13" height="13"><rect x="0.5" y="0.5" width="12" height="12" fill="#fff" stroke="#8f8f8f" stroke-width="1"/><path d="M2.6 6.6 L5.2 9.8 L10.2 2.6" fill="none" stroke="#000" stroke-width="1.5"/></svg><svg class="a" style="left:66px;top:711.0px" width="14" height="14"><circle cx="7" cy="7" r="5.8" fill="#fff" stroke="#222" stroke-width="0.9"/></svg><svg class="a" style="left:20px;top:734px" width="6" height="9"><path d="M0 0 V8 L4.2 4 Z" fill="#5a5a5a"/></svg><svg class="a" style="left:31.5px;top:731.7px" width="13" height="13"><rect x="0.5" y="0.5" width="12" height="12" fill="#fff" stroke="#8f8f8f" stroke-width="1"/><path d="M2.6 6.6 L5.2 9.8 L10.2 2.6" fill="none" stroke="#000" stroke-width="1.5"/></svg><svg class="a" style="left:52.5px;top:731.5px" width="13" height="13"><rect x="0.00" y="0.00" width="4.38" height="4.38" fill="#1e2e44"/><rect x="4.33" y="0.00" width="4.38" height="4.38" fill="#b0c8e4"/><rect x="8.67" y="0.00" width="4.38" height="4.38" fill="#1e2e44"/><rect x="0.00" y="4.33" width="4.38" height="4.38" fill="#b0c8e4"/><rect x="4.33" y="4.33" width="4.38" height="4.38" fill="#1e2e44"/><rect x="8.67" y="4.33" width="4.38" height="4.38" fill="#b0c8e4"/><rect x="0.00" y="8.67" width="4.38" height="4.38" fill="#1e2e44"/><rect x="4.33" y="8.67" width="4.38" height="4.38" fill="#b0c8e4"/></svg><div class="t" style="left:73.30px;top:733.44px;font-size:12px;color:#000;font-weight:normal;;transform:scaleX(0.9174)">S2A_L2A_T33UUU_20190216_20m_9bands_berlin.tif</div><svg class="a" style="left:20px;top:752px" width="6" height="9"><path d="M0 0 V8 L4.2 4 Z" fill="#5a5a5a"/></svg><svg class="a" style="left:31.5px;top:749.7px" width="13" height="13"><rect x="0.5" y="0.5" width="12" height="12" fill="#fff" stroke="#8f8f8f" stroke-width="1"/><path d="M2.6 6.6 L5.2 9.8 L10.2 2.6" fill="none" stroke="#000" stroke-width="1.5"/></svg><svg class="a" style="left:52.5px;top:749.5px" width="13" height="13"><rect x="0.00" y="0.00" width="4.38" height="4.38" fill="#1e2e44"/><rect x="4.33" y="0.00" width="4.38" height="4.38" fill="#b0c8e4"/><rect x="8.67" y="0.00" width="4.38" height="4.38" fill="#1e2e44"/><rect x="0.00" y="4.33" width="4.38" height="4.38" fill="#b0c8e4"/><rect x="4.33" y="4.33" width="4.38" height="4.38" fill="#1e2e44"/><rect x="8.67" y="4.33" width="4.38" height="4.38" fill="#b0c8e4"/><rect x="0.00" y="8.67" width="4.38" height="4.38" fill="#1e2e44"/><rect x="4.33" y="8.67" width="4.38" height="4.38" fill="#b0c8e4"/></svg><div class="t" style="left:73.30px;top:751.44px;font-size:12px;color:#000;font-weight:normal;;transform:scaleX(0.9174)">S2A_L2A_T33UUU_20190422_20m_9bands_berlin.tif</div><svg class="a" style="left:20px;top:770px" width="6" height="9"><path d="M0 0 V8 L4.2 4 Z" fill="#5a5a5a"/></svg><svg class="a" style="left:31.5px;top:767.7px" width="13" height="13"><rect x="0.5" y="0.5" width="12" height="12" fill="#fff" stroke="#8f8f8f" stroke-width="1"/><path d="M2.6 6.6 L5.2 9.8 L10.2 2.6" fill="none" stroke="#000" stroke-width="1.5"/></svg><svg class="a" style="left:52.5px;top:767.5px" width="13" height="13"><rect x="0.00" y="0.00" width="4.38" height="4.38" fill="#1e2e44"/><rect x="4.33" y="0.00" width="4.38" height="4.38" fill="#b0c8e4"/><rect x="8.67" y="0.00" width="4.38" height="4.38" fill="#1e2e44"/><rect x="0.00" y="4.33" width="4.38" height="4.38" fill="#b0c8e4"/><rect x="4.33" y="4.33" width="4.38" height="4.38" fill="#1e2e44"/><rect x="8.67" y="4.33" width="4.38" height="4.38" fill="#b0c8e4"/><rect x="0.00" y="8.67" width="4.38" height="4.38" fill="#1e2e44"/><rect x="4.33" y="8.67" width="4.38" height="4.38" fill="#b0c8e4"/></svg><div class="t" style="left:73.30px;top:769.44px;font-size:12px;color:#000;font-weight:normal;;transform:scaleX(0.9174)">S2A_L2A_T33UUU_20190613_20m_9bands_berlin.tif</div><svg class="a" style="left:20px;top:788px" width="6" height="9"><path d="M0 0 V8 L4.2 4 Z" fill="#5a5a5a"/></svg><svg class="a" style="left:31.5px;top:785.7px" width="13" height="13"><rect x="0.5" y="0.5" width="12" height="12" fill="#fff" stroke="#8f8f8f" stroke-width="1"/><path d="M2.6 6.6 L5.2 9.8 L10.2 2.6" fill="none" stroke="#000" stroke-width="1.5"/></svg><svg class="a" style="left:52.5px;top:785.5px" width="13" height="13"><rect x="0.00" y="0.00" width="4.38" height="4.38" fill="#1e2e44"/><rect x="4.33" y="0.00" width="4.38" height="4.38" fill="#b0c8e4"/><rect x="8.67" y="0.00" width="4.38" height="4.38" fill="#1e2e44"/><rect x="0.00" y="4.33" width="4.38" height="4.38" fill="#b0c8e4"/><rect x="4.33" y="4.33" width="4.38" height="4.38" fill="#1e2e44"/><rect x="8.67" y="4.33" width="4.38" height="4.38" fill="#b0c8e4"/><rect x="0.00" y="8.67" width="4.38" height="4.38" fill="#1e2e44"/><rect x="4.33" y="8.67" width="4.38" height="4.38" fill="#b0c8e4"/></svg><div class="t" style="left:73.30px;top:787.44px;font-size:12px;color:#000;font-weight:normal;;transform:scaleX(0.9174)">S2A_L2A_T33UUU_20190726_20m_9bands_berlin.tif</div><svg class="a" style="left:20px;top:806px" width="6" height="9"><path d="M0 0 V8 L4.2 4 Z" fill="#5a5a5a"/></svg><svg class="a" style="left:31.5px;top:803.7px" width="13" height="13"><rect x="0.5" y="0.5" width="12" height="12" fill="#fff" stroke="#8f8f8f" stroke-width="1"/><path d="M2.6 6.6 L5.2 9.8 L10.2 2.6" fill="none" stroke="#000" stroke-width="1.5"/></svg><svg class="a" style="left:52.5px;top:803.5px" width="13" height="13"><rect x="0.00" y="0.00" width="4.38" height="4.38" fill="#1e2e44"/><rect x="4.33" y="0.00" width="4.38" height="4.38" fill="#b0c8e4"/><rect x="8.67" y="0.00" width="4.38" height="4.38" fill="#1e2e44"/><rect x="0.00" y="4.33" width="4.38" height="4.38" fill="#b0c8e4"/><rect x="4.33" y="4.33" width="4.38" height="4.38" fill="#1e2e44"/><rect x="8.67" y="4.33" width="4.38" height="4.38" fill="#b0c8e4"/><rect x="0.00" y="8.67" width="4.38" height="4.38" fill="#1e2e44"/><rect x="4.33" y="8.67" width="4.38" height="4.38" fill="#b0c8e4"/></svg><div class="t" style="left:73.30px;top:805.44px;font-size:12px;color:#000;font-weight:normal;;transform:scaleX(0.9174)">S2A_L2A_T33UUU_20190825_20m_9bands_berlin.tif</div><svg class="a" style="left:20px;top:824px" width="6" height="9"><path d="M0 0 V8 L4.2 4 Z" fill="#5a5a5a"/></svg><svg class="a" style="left:31.5px;top:821.7px" width="13" height="13"><rect x="0.5" y="0.5" width="12" height="12" fill="#fff" stroke="#8f8f8f" stroke-width="1"/><path d="M2.6 6.6 L5.2 9.8 L10.2 2.6" fill="none" stroke="#000" stroke-width="1.5"/></svg><svg class="a" style="left:52.5px;top:821.5px" width="13" height="13"><rect x="0.00" y="0.00" width="4.38" height="4.38" fill="#1e2e44"/><rect x="4.33" y="0.00" width="4.38" height="4.38" fill="#b0c8e4"/><rect x="8.67" y="0.00" width="4.38" height="4.38" fill="#1e2e44"/><rect x="0.00" y="4.33" width="4.38" height="4.38" fill="#b0c8e4"/><rect x="4.33" y="4.33" width="4.38" height="4.38" fill="#1e2e44"/><rect x="8.67" y="4.33" width="4.38" height="4.38" fill="#b0c8e4"/><rect x="0.00" y="8.67" width="4.38" height="4.38" fill="#1e2e44"/><rect x="4.33" y="8.67" width="4.38" height="4.38" fill="#b0c8e4"/></svg><div class="t" style="left:73.30px;top:823.44px;font-size:12px;color:#000;font-weight:normal;;transform:scaleX(0.9174)">S2A_L2A_T33UUU_20190921_20m_9bands_berlin.tif</div><svg class="a" style="left:20px;top:842px" width="6" height="9"><path d="M0 0 V8 L4.2 4 Z" fill="#5a5a5a"/></svg><svg class="a" style="left:31.5px;top:839.7px" width="13" height="13"><rect x="0.5" y="0.5" width="12" height="12" fill="#fff" stroke="#8f8f8f" stroke-width="1"/><path d="M2.6 6.6 L5.2 9.8 L10.2 2.6" fill="none" stroke="#000" stroke-width="1.5"/></svg><svg class="a" style="left:52.5px;top:839.5px" width="13" height="13"><rect x="0.00" y="0.00" width="4.38" height="4.38" fill="#1e2e44"/><rect x="4.33" y="0.00" width="4.38" height="4.38" fill="#b0c8e4"/><rect x="8.67" y="0.00" width="4.38" height="4.38" fill="#1e2e44"/><rect x="0.00" y="4.33" width="4.38" height="4.38" fill="#b0c8e4"/><rect x="4.33" y="4.33" width="4.38" height="4.38" fill="#1e2e44"/><rect x="8.67" y="4.33" width="4.38" height="4.38" fill="#b0c8e4"/><rect x="0.00" y="8.67" width="4.38" height="4.38" fill="#1e2e44"/><rect x="4.33" y="8.67" width="4.38" height="4.38" fill="#b0c8e4"/></svg><div class="t" style="left:73.30px;top:841.44px;font-size:12px;color:#000;font-weight:normal;;transform:scaleX(0.9174)">S2A_L2A_T33UUU_20191210_20m_9bands_berlin.tif</div><div class="a" style="left:378px;top:112px;width:857px;height:462px;background:#ffffff;"></div><svg class="a" style="left:379px;top:113px" width="855" height="460" viewBox="379 113 855 460"><rect x="379" y="113" width="855" height="460" fill="#000"/><path d="M425 516.5 H1225" stroke="#4a4a4a" stroke-width="1"/><path d="M425 495.5 H1225" stroke="#262626" stroke-width="1"/><path d="M425 474.5 H1225" stroke="#262626" stroke-width="1"/><path d="M425 453.5 H1225" stroke="#262626" stroke-width="1"/><path d="M425 432.5 H1225" stroke="#262626" stroke-width="1"/><path d="M425 411.5 H1225" stroke="#4a4a4a" stroke-width="1"/><path d="M425 390.5 H1225" stroke="#262626" stroke-width="1"/><path d="M425 369.5 H1225" stroke="#262626" stroke-width="1"/><path d="M425 348.5 H1225" stroke="#262626" stroke-width="1"/><path d="M425 327.5 H1225" stroke="#262626" stroke-width="1"/><path d="M425 306.5 H1225" stroke="#4a4a4a" stroke-width="1"/><path d="M425 285.5 H1225" stroke="#262626" stroke-width="1"/><path d="M425 264.5 H1225" stroke="#262626" stroke-width="1"/><path d="M425 243.5 H1225" stroke="#262626" stroke-width="1"/><path d="M425 222.5 H1225" stroke="#262626" stroke-width="1"/><path d="M425 201.5 H1225" stroke="#4a4a4a" stroke-width="1"/><path d="M425 180.5 H1225" stroke="#262626" stroke-width="1"/><path d="M425 159.5 H1225" stroke="#262626" stroke-width="1"/><path d="M425 138.5 H1225" stroke="#262626" stroke-width="1"/><path d="M451.5 123 V527" stroke="#2c2c2c" stroke-width="1"/><path d="M544.5 123 V527" stroke="#2c2c2c" stroke-width="1"/><path d="M637.5 123 V527" stroke="#2c2c2c" stroke-width="1"/><path d="M731.5 123 V527" stroke="#2c2c2c" stroke-width="1"/><path d="M824.5 123 V527" stroke="#2c2c2c" stroke-width="1"/><path d="M918.5 123 V527" stroke="#2c2c2c" stroke-width="1"/><path d="M1011.5 123 V527" stroke="#2c2c2c" stroke-width="1"/><path d="M1104.5 123 V527" stroke="#2c2c2c" stroke-width="1"/><path d="M1198.5 123 V527" stroke="#2c2c2c" stroke-width="1"/><path d="M424.5 123 V527.5 H1225" fill="none" stroke="#a2a2a2" stroke-width="1"/><polyline points="450.6,509.1 544.0,497.8 637.4,488.2 730.8,469.7 824.2,450.9 917.6,435.9 1011.0,414.8 1104.4,387.7 1197.8,426.1" fill="none" stroke="#22ff00" stroke-width="1.1"/><circle cx="450.6" cy="509.1" r="2.6" fill="#22ff00"/><circle cx="544.0" cy="497.8" r="2.6" fill="#22ff00"/><circle cx="637.4" cy="488.2" r="2.6" fill="#22ff00"/><circle cx="730.8" cy="469.7" r="2.6" fill="#22ff00"/><circle cx="824.2" cy="450.9" r="2.6" fill="#22ff00"/><circle cx="917.6" cy="435.9" r="2.6" fill="#22ff00"/><circle cx="1011.0" cy="414.8" r="2.6" fill="#22ff00"/><circle cx="1104.4" cy="387.7" r="2.6" fill="#22ff00"/><circle cx="1197.8" cy="426.1" r="2.6" fill="#22ff00"/><polyline points="450.6,493.9 544.0,460.5 637.4,485.8 730.8,421.5 824.2,303.9 917.6,289.0 1011.0,267.9 1104.4,354.8 1197.8,417.9" fill="none" stroke="#99ff00" stroke-width="1.1"/><circle cx="450.6" cy="493.9" r="2.6" fill="#99ff00"/><circle cx="544.0" cy="460.5" r="2.6" fill="#99ff00"/><circle cx="637.4" cy="485.8" r="2.6" fill="#99ff00"/><circle cx="730.8" cy="421.5" r="2.6" fill="#99ff00"/><circle cx="824.2" cy="303.9" r="2.6" fill="#99ff00"/><circle cx="917.6" cy="289.0" r="2.6" fill="#99ff00"/><circle cx="1011.0" cy="267.9" r="2.6" fill="#99ff00"/><circle cx="1104.4" cy="354.8" r="2.6" fill="#99ff00"/><circle cx="1197.8" cy="417.9" r="2.6" fill="#99ff00"/><polyline points="450.6,503.6 544.0,481.2 637.4,497.3 730.8,447.6 824.2,243.8 917.6,160.7 1011.0,140.9 1104.4,345.9 1197.8,439.0" fill="none" stroke="#ddff00" stroke-width="1.1"/><circle cx="450.6" cy="503.6" r="2.6" fill="#ddff00"/><circle cx="544.0" cy="481.2" r="2.6" fill="#ddff00"/><circle cx="637.4" cy="497.3" r="2.6" fill="#ddff00"/><circle cx="730.8" cy="447.6" r="2.6" fill="#ddff00"/><circle cx="824.2" cy="243.8" r="2.6" fill="#ddff00"/><circle cx="917.6" cy="160.7" r="2.6" fill="#ddff00"/><circle cx="1011.0" cy="140.9" r="2.6" fill="#ddff00"/><circle cx="1104.4" cy="345.9" r="2.6" fill="#ddff00"/><circle cx="1197.8" cy="439.0" r="2.6" fill="#ddff00"/><polyline points="450.6,501.2 544.0,487.2 637.4,496.8 730.8,463.4 824.2,284.8 917.6,248.0 1011.0,224.9 1104.4,376.8 1197.8,452.4" fill="none" stroke="#ffcc00" stroke-width="1.1"/><circle cx="450.6" cy="501.2" r="2.6" fill="#ffcc00"/><circle cx="544.0" cy="487.2" r="2.6" fill="#ffcc00"/><circle cx="637.4" cy="496.8" r="2.6" fill="#ffcc00"/><circle cx="730.8" cy="463.4" r="2.6" fill="#ffcc00"/><circle cx="824.2" cy="284.8" r="2.6" fill="#ffcc00"/><circle cx="917.6" cy="248.0" r="2.6" fill="#ffcc00"/><circle cx="1011.0" cy="224.9" r="2.6" fill="#ffcc00"/><circle cx="1104.4" cy="376.8" r="2.6" fill="#ffcc00"/><circle cx="1197.8" cy="452.4" r="2.6" fill="#ffcc00"/><polyline points="450.6,495.9 544.0,478.8 637.4,497.3 730.8,459.7 824.2,296.0 917.6,222.7 1011.0,195.9 1104.4,376.8 1197.8,458.9" fill="none" stroke="#ff8800" stroke-width="1.1"/><circle cx="450.6" cy="495.9" r="2.6" fill="#ff8800"/><circle cx="544.0" cy="478.8" r="2.6" fill="#ff8800"/><circle cx="637.4" cy="497.3" r="2.6" fill="#ff8800"/><circle cx="730.8" cy="459.7" r="2.6" fill="#ff8800"/><circle cx="824.2" cy="296.0" r="2.6" fill="#ff8800"/><circle cx="917.6" cy="222.7" r="2.6" fill="#ff8800"/><circle cx="1011.0" cy="195.9" r="2.6" fill="#ff8800"/><circle cx="1104.4" cy="376.8" r="2.6" fill="#ff8800"/><circle cx="1197.8" cy="458.9" r="2.6" fill="#ff8800"/><polyline points="450.6,502.8 544.0,487.2 637.4,497.3 730.8,450.1 824.2,278.9 917.6,231.9 1011.0,202.0 1104.4,376.8 1197.8,454.7" fill="none" stroke="#ff2200" stroke-width="1.1"/><circle cx="450.6" cy="502.8" r="2.6" fill="#ff2200"/><circle cx="544.0" cy="487.2" r="2.6" fill="#ff2200"/><circle cx="637.4" cy="497.3" r="2.6" fill="#ff2200"/><circle cx="730.8" cy="450.1" r="2.6" fill="#ff2200"/><circle cx="824.2" cy="278.9" r="2.6" fill="#ff2200"/><circle cx="917.6" cy="231.9" r="2.6" fill="#ff2200"/><circle cx="1011.0" cy="202.0" r="2.6" fill="#ff2200"/><circle cx="1104.4" cy="376.8" r="2.6" fill="#ff2200"/><circle cx="1197.8" cy="454.7" r="2.6" fill="#ff2200"/><polyline points="450.6,488.9 544.0,485.8 637.4,481.8 730.8,456.3 824.2,438.8 917.6,417.9 1011.0,403.0 1104.4,411.7 1197.8,448.5" fill="none" stroke="#ff00cc" stroke-width="1.1"/><circle cx="450.6" cy="488.9" r="2.6" fill="#ff00cc"/><circle cx="544.0" cy="485.8" r="2.6" fill="#ff00cc"/><circle cx="637.4" cy="481.8" r="2.6" fill="#ff00cc"/><circle cx="730.8" cy="456.3" r="2.6" fill="#ff00cc"/><circle cx="824.2" cy="438.8" r="2.6" fill="#ff00cc"/><circle cx="917.6" cy="417.9" r="2.6" fill="#ff00cc"/><circle cx="1011.0" cy="403.0" r="2.6" fill="#ff00cc"/><circle cx="1104.4" cy="411.7" r="2.6" fill="#ff00cc"/><circle cx="1197.8" cy="448.5" r="2.6" fill="#ff00cc"/><path d="M433 143.5 H454" stroke="#22ff00" stroke-width="1.6"/><circle cx="443.5" cy="143.0" r="2.6" fill="#22ff00"/><path d="M433 165.5 H454" stroke="#99ff00" stroke-width="1.6"/><circle cx="443.5" cy="165.0" r="2.6" fill="#99ff00"/><path d="M433 187.5 H454" stroke="#ddff00" stroke-width="1.6"/><circle cx="443.5" cy="187.0" r="2.6" fill="#ddff00"/><path d="M433 209.5 H454" stroke="#ffcc00" stroke-width="1.6"/><circle cx="443.5" cy="209.0" r="2.6" fill="#ffcc00"/><path d="M433 231.5 H454" stroke="#ff8800" stroke-width="1.6"/><circle cx="443.5" cy="231.0" r="2.6" fill="#ff8800"/><path d="M433 253.5 H454" stroke="#ff2200" stroke-width="1.6"/><circle cx="443.5" cy="253.0" r="2.6" fill="#ff2200"/><path d="M433 275.5 H454" stroke="#ff00cc" stroke-width="1.6"/><circle cx="443.5" cy="275.0" r="2.6" fill="#ff00cc"/></svg><div class="t" style="left:462.00px;top:137.82px;font-size:12.5px;color:#b4b4b4;font-weight:normal;-webkit-text-stroke:0;transform:scaleX(0.9969)">S2A_L2A_T33UUU_20190216_20m_9bands_berlin.tif [column 1559, row 694]</div><div class="t" style="left:462.00px;top:159.82px;font-size:12.5px;color:#b4b4b4;font-weight:normal;-webkit-text-stroke:0;transform:scaleX(0.9969)">S2A_L2A_T33UUU_20190422_20m_9bands_berlin.tif [column 1559, row 694]</div><div class="t" style="left:462.00px;top:181.82px;font-size:12.5px;color:#b4b4b4;font-weight:normal;-webkit-text-stroke:0;transform:scaleX(0.9969)">S2A_L2A_T33UUU_20190613_20m_9bands_berlin.tif [column 1559, row 694]</div><div class="t" style="left:462.00px;top:203.82px;font-size:12.5px;color:#b4b4b4;font-weight:normal;-webkit-text-stroke:0;transform:scaleX(0.9969)">S2A_L2A_T33UUU_20190726_20m_9bands_berlin.tif [column 1559, row 694]</div><div class="t" style="left:462.00px;top:225.82px;font-size:12.5px;color:#b4b4b4;font-weight:normal;-webkit-text-stroke:0;transform:scaleX(0.9969)">S2A_L2A_T33UUU_20190825_20m_9bands_berlin.tif [column 1559, row 694]</div><div class="t" style="left:462.00px;top:247.82px;font-size:12.5px;color:#b4b4b4;font-weight:normal;-webkit-text-stroke:0;transform:scaleX(0.9969)">S2A_L2A_T33UUU_20190921_20m_9bands_berlin.tif [column 1559, row 694]</div><div class="t" style="left:462.00px;top:269.82px;font-size:12.5px;color:#b4b4b4;font-weight:normal;-webkit-text-stroke:0;transform:scaleX(0.9969)">S2A_L2A_T33UUU_20191210_20m_9bands_berlin.tif [column 1559, row 694]</div><div class="t" style="left:412.80px;top:512.09px;font-size:11px;color:#b4b4b4;font-weight:normal;-webkit-text-stroke:0;transform:scaleX(0.8980)">0</div><div class="t" style="left:396.80px;top:407.04px;font-size:11px;color:#b4b4b4;font-weight:normal;-webkit-text-stroke:0;transform:scaleX(0.8781)">1000</div><div class="t" style="left:396.80px;top:301.99px;font-size:11px;color:#b4b4b4;font-weight:normal;-webkit-text-stroke:0;transform:scaleX(0.8781)">2000</div><div class="t" style="left:396.80px;top:196.94px;font-size:11px;color:#b4b4b4;font-weight:normal;-webkit-text-stroke:0;transform:scaleX(0.8781)">3000</div><div class="t" style="left:447.60px;top:531.69px;font-size:11px;color:#b4b4b4;font-weight:normal;-webkit-text-stroke:0;transform:scaleX(0.9796)">1</div><div class="t" style="left:541.00px;top:531.69px;font-size:11px;color:#b4b4b4;font-weight:normal;-webkit-text-stroke:0;transform:scaleX(0.9796)">2</div><div class="t" style="left:634.40px;top:531.69px;font-size:11px;color:#b4b4b4;font-weight:normal;-webkit-text-stroke:0;transform:scaleX(0.9796)">3</div><div class="t" style="left:727.80px;top:531.69px;font-size:11px;color:#b4b4b4;font-weight:normal;-webkit-text-stroke:0;transform:scaleX(0.9796)">4</div><div class="t" style="left:821.20px;top:531.69px;font-size:11px;color:#b4b4b4;font-weight:normal;-webkit-text-stroke:0;transform:scaleX(0.9796)">5</div><div class="t" style="left:914.60px;top:531.69px;font-size:11px;color:#b4b4b4;font-weight:normal;-webkit-text-stroke:0;transform:scaleX(0.9796)">6</div><div class="t" style="left:1008.00px;top:531.69px;font-size:11px;color:#b4b4b4;font-weight:normal;-webkit-text-stroke:0;transform:scaleX(0.9796)">7</div><div class="t" style="left:1101.40px;top:531.69px;font-size:11px;color:#b4b4b4;font-weight:normal;-webkit-text-stroke:0;transform:scaleX(0.9796)">8</div><div class="t" style="left:1194.80px;top:531.69px;font-size:11px;color:#b4b4b4;font-weight:normal;-webkit-text-stroke:0;transform:scaleX(0.9796)">9</div><div class="t" style="left:789.00px;top:553.09px;font-size:11px;color:#b4b4b4;font-weight:normal;-webkit-text-stroke:0;transform:scaleX(0.9429)">Band Number</div><svg class="a" style="left:1927px;top:98px" width="26" height="12" viewBox="0 0 26 12"><rect x="0.5" y="0.5" width="10.5" height="10.5" rx="2" fill="none" stroke="#8a8a8a" stroke-width="1"/><rect x="4" y="2.5" width="4.5" height="4" fill="none" stroke="#6a6a6a" stroke-width="1"/><rect x="2.5" y="4.5" width="4.5" height="4" fill="#f0f0f0" stroke="#6a6a6a" stroke-width="1"/><rect x="14.5" y="0.5" width="10.5" height="10.5" rx="2" fill="none" stroke="#8a8a8a" stroke-width="1"/><path d="M17 3 L22.5 8.5 M22.5 3 L17 8.5" stroke="#6a6a6a" stroke-width="2"/></svg><div class="a" style="left:1238px;top:147px;width:715px;height:426px;background:#fafafa;border:1px solid #b4b4b4"></div><div class="a" style="left:1238px;top:113px;width:52px;height:36px;background:#fdfdfd;border:1px solid #a8a8a8;border-bottom:none;border-radius:3px 3px 0 0"></div><svg class="a" style="left:1252px;top:120px" width="21" height="21"><rect x="0.5" y="0.5" width="19" height="19" rx="1" fill="#f2ebe4" stroke="#6a9ad0" stroke-width="1.2"/><rect x="1" y="1" width="18" height="4.5" fill="#bcdcf2"/><path d="M1 5.5 H19" stroke="#6a9ad0" stroke-width="1"/><rect x="3" y="2.3" width="4" height="1.6" fill="#5b8fc7"/><rect x="9" y="2.3" width="8.5" height="1.6" fill="#5b8fc7"/><path d="M3 7.5 H6 M8 7.5 H17 M3 10.5 H6 M8 10.5 H17 M3 13.5 H6 M8 13.5 H17 M3 16.5 H6 M8 16.5 H17" stroke="#5b8fc7" stroke-width="1"/></svg><div class="t" style="left:1248.40px;top:165.07px;font-size:11.5px;color:#000;font-weight:normal;;transform:scaleX(0.9385)">Source type</div><div class="a" style="left:1313px;top:158px;width:630px;height:22px;background:linear-gradient(#fcfcfc,#ececec);border:1px solid #acacac;border-radius:3px"></div><div class="t" style="left:1317.50px;top:165.07px;font-size:11.5px;color:#000;font-weight:normal;;transform:scaleX(0.9919)">Raster layer</div><svg class="a" style="left:1927px;top:167.0px" width="9" height="5"><path d="M0 0 H8 L4 4.2 Z" fill="#5a5a5a"/></svg><div class="t" style="left:1257.50px;top:202.57px;font-size:11.5px;color:#000;font-weight:normal;;transform:scaleX(0.9473)">Profile type</div><div class="a" style="left:1319px;top:195px;width:615px;height:22px;background:linear-gradient(#fcfcfc,#ececec);border:1px solid #acacac;border-radius:3px"></div><div class="t" style="left:1323.40px;top:202.57px;font-size:11.5px;color:#000;font-weight:normal;;transform:scaleX(0.9387)">Z-Profile at cursor location (all bands)</div><svg class="a" style="left:1918px;top:204.0px" width="9" height="5"><path d="M0 0 H8 L4 4.2 Z" fill="#5a5a5a"/></svg><div class="t" style="left:1318.50px;top:230.27px;font-size:11.5px;color:#000;font-weight:normal;;transform:scaleX(0.9208)">Use the</div><svg class="a" style="left:1365px;top:226px" width="18" height="18"><path d="M1 5.5 H5 M8 5.5 H12 M6.5 1 V4.5 M6.5 7 V11" stroke="#f08080" stroke-width="0.8"/><path d="M6.5 5 L6.5 15 L8.8 13 L10.8 17 L12.5 16.2 L10.6 12.3 L13.8 12 Z" fill="#fff" stroke="#333" stroke-width="0.8" stroke-linejoin="round"/></svg><div class="t" style="left:1391.50px;top:230.27px;font-size:11.5px;color:#000;font-weight:normal;;transform:scaleX(0.9360)">map tool to select a locations.</div><div class="a" style="left:1258px;top:252px;width:677px;height:273px;background:#fff;border:1px solid #acacac"></div><div class="a" style="left:1259px;top:253px;width:675px;height:19px;background:linear-gradient(#fbfbfb,#efefef);border-bottom:1px solid #a6a6a6"></div><div class="a" style="left:1269px;top:254px;width:1px;height:17px;background:#d8d8d8;"></div><div class="a" style="left:1599px;top:254px;width:1px;height:17px;background:#d8d8d8;"></div><div class="a" style="left:1654px;top:254px;width:1px;height:17px;background:#d8d8d8;"></div><div class="a" style="left:1754px;top:254px;width:1px;height:17px;background:#d8d8d8;"></div><div class="a" style="left:1854px;top:254px;width:1px;height:17px;background:#d8d8d8;"></div><div class="t" style="left:1418.00px;top:258.27px;font-size:11.5px;color:#000;font-weight:normal;;transform:scaleX(0.9446)">Raster</div><div class="t" style="left:1614.00px;top:258.27px;font-size:11.5px;color:#000;font-weight:normal;;transform:scaleX(0.9680)">Band</div><div class="t" style="left:1691.00px;top:258.27px;font-size:11.5px;color:#000;font-weight:bold;;transform:scaleX(1.0182)">Style</div><div class="t" style="left:1786.25px;top:258.27px;font-size:11.5px;color:#000;font-weight:normal;;transform:scaleX(0.9942)">Scaling</div><div class="t" style="left:1881.00px;top:258.27px;font-size:11.5px;color:#000;font-weight:normal;;transform:scaleX(1.0428)">Analytics</div><div class="a" style="left:1259px;top:272px;width:10px;height:238px;background:#f2f2f2;"></div><div class="a" style="left:1269px;top:272px;width:1px;height:238px;background:#dedede;"></div><div class="a" style="left:1259px;top:301px;width:675px;height:2px;background:#bdbdbd;"></div><div class="t" style="left:1261.00px;top:282.29px;font-size:11px;color:#000;font-weight:bold;;transform:scaleX(0.9796)">1</div><div class="a" style="left:1270px;top:272px;width:329px;height:30px;background:linear-gradient(#fcfcfc,#ececec);border:1px solid #acacac;border-radius:3px"></div><div class="t" style="left:1295.00px;top:281.87px;font-size:11.5px;color:#000;font-weight:normal;;transform:scaleX(0.9572)">S2A_L2A_T33UUU_20190216_20m_9bands_berlin.tif</div><svg class="a" style="left:1583.5px;top:285.0px" width="9" height="5"><path d="M0 0 H8 L4 4.2 Z" fill="#5a5a5a"/></svg><svg class="a" style="left:1278px;top:278.5px" width="13" height="13"><rect x="0.00" y="0.00" width="4.38" height="4.38" fill="#1e2e44"/><rect x="4.33" y="0.00" width="4.38" height="4.38" fill="#b0c8e4"/><rect x="8.67" y="0.00" width="4.38" height="4.38" fill="#1e2e44"/><rect x="0.00" y="4.33" width="4.38" height="4.38" fill="#b0c8e4"/><rect x="4.33" y="4.33" width="4.38" height="4.38" fill="#1e2e44"/><rect x="8.67" y="4.33" width="4.38" height="4.38" fill="#b0c8e4"/><rect x="0.00" y="8.67" width="4.38" height="4.38" fill="#1e2e44"/><rect x="4.33" y="8.67" width="4.38" height="4.38" fill="#b0c8e4"/></svg><div class="a" style="left:1600px;top:272px;width:54px;height:30px;background:linear-gradient(#fcfcfc,#ececec);border:1px solid #acacac;border-radius:3px"></div><div class="t" style="left:1605.50px;top:281.87px;font-size:11.5px;color:#000;font-weight:normal;;transform:scaleX(0.9680)">Band</div><svg class="a" style="left:1638.5px;top:285.0px" width="9" height="5"><path d="M0 0 H8 L4 4.2 Z" fill="#5a5a5a"/></svg><div class="a" style="left:1654px;top:272px;width:100px;height:30px;background:linear-gradient(#fcfcfc,#ececec);border:1px solid #acacac;border-radius:2px"></div><svg class="a" style="left:1656px;top:273.7px" width="85" height="24"><rect width="85" height="24" fill="#000"/><path d="M0 19.5 L42.5 12 L85 17.5" fill="none" stroke="#22ff00" stroke-width="1.1" opacity="0.75"/><circle cx="42.5" cy="11.8" r="2.3" fill="#22ff00"/></svg><svg class="a" style="left:1744px;top:285px" width="9" height="5"><path d="M0 0 H8 L4 4.2 Z" fill="#5a5a5a"/></svg><div class="a" style="left:1755px;top:273px;width:99px;height:28px;background:#fff;border:1px solid #b4b4b4;border-radius:2px"></div><div class="t" style="left:1758.50px;top:281.87px;font-size:11.5px;color:#000;font-weight:normal;;transform:scaleX(1.0121)">0. + 1. * y</div><div class="a" style="left:1855px;top:275.5px;width:70px;height:22px;background:#fff;border:1px solid #acacac;border-radius:3px"></div><div class="a" style="left:1930px;top:275.5px;width:4px;height:22px;background:#fff;border:1px solid #acacac;border-right:none;border-radius:3px 0 0 3px"></div><div class="a" style="left:1259px;top:331px;width:675px;height:2px;background:#bdbdbd;"></div><div class="t" style="left:1261.00px;top:312.29px;font-size:11px;color:#000;font-weight:normal;;transform:scaleX(0.9796)">2</div><div class="a" style="left:1270px;top:302px;width:329px;height:30px;background:linear-gradient(#fcfcfc,#ececec);border:1px solid #acacac;border-radius:3px"></div><div class="t" style="left:1295.00px;top:311.87px;font-size:11.5px;color:#000;font-weight:normal;;transform:scaleX(0.9572)">S2A_L2A_T33UUU_20190422_20m_9bands_berlin.tif</div><svg class="a" style="left:1583.5px;top:315.0px" width="9" height="5"><path d="M0 0 H8 L4 4.2 Z" fill="#5a5a5a"/></svg><svg class="a" style="left:1278px;top:308.5px" width="13" height="13"><rect x="0.00" y="0.00" width="4.38" height="4.38" fill="#1e2e44"/><rect x="4.33" y="0.00" width="4.38" height="4.38" fill="#b0c8e4"/><rect x="8.67" y="0.00" width="4.38" height="4.38" fill="#1e2e44"/><rect x="0.00" y="4.33" width="4.38" height="4.38" fill="#b0c8e4"/><rect x="4.33" y="4.33" width="4.38" height="4.38" fill="#1e2e44"/><rect x="8.67" y="4.33" width="4.38" height="4.38" fill="#b0c8e4"/><rect x="0.00" y="8.67" width="4.38" height="4.38" fill="#1e2e44"/><rect x="4.33" y="8.67" width="4.38" height="4.38" fill="#b0c8e4"/></svg><div class="a" style="left:1600px;top:302px;width:54px;height:30px;background:linear-gradient(#fcfcfc,#ececec);border:1px solid #acacac;border-radius:3px"></div><div class="t" style="left:1605.50px;top:311.87px;font-size:11.5px;color:#000;font-weight:normal;;transform:scaleX(0.9680)">Band</div><svg class="a" style="left:1638.5px;top:315.0px" width="9" height="5"><path d="M0 0 H8 L4 4.2 Z" fill="#5a5a5a"/></svg><div class="a" style="left:1654px;top:302px;width:100px;height:30px;background:linear-gradient(#fcfcfc,#ececec);border:1px solid #acacac;border-radius:2px"></div><svg class="a" style="left:1656px;top:303.7px" width="85" height="24"><rect width="85" height="24" fill="#000"/><path d="M0 19.5 L42.5 12 L85 17.5" fill="none" stroke="#99ff00" stroke-width="1.1" opacity="0.75"/><circle cx="42.5" cy="11.8" r="2.3" fill="#99ff00"/></svg><svg class="a" style="left:1744px;top:315px" width="9" height="5"><path d="M0 0 H8 L4 4.2 Z" fill="#5a5a5a"/></svg><div class="a" style="left:1755px;top:303px;width:99px;height:28px;background:#fff;border:1px solid #b4b4b4;border-radius:2px"></div><div class="t" style="left:1758.50px;top:311.87px;font-size:11.5px;color:#000;font-weight:normal;;transform:scaleX(1.0121)">0. + 1. * y</div><div class="a" style="left:1855px;top:305.5px;width:70px;height:22px;background:#fff;border:1px solid #acacac;border-radius:3px"></div><div class="a" style="left:1930px;top:305.5px;width:4px;height:22px;background:#fff;border:1px solid #acacac;border-right:none;border-radius:3px 0 0 3px"></div><div class="a" style="left:1259px;top:361px;width:675px;height:2px;background:#bdbdbd;"></div><div class="t" style="left:1261.00px;top:342.29px;font-size:11px;color:#000;font-weight:normal;;transform:scaleX(0.9796)">3</div><div class="a" style="left:1270px;top:332px;width:329px;height:30px;background:linear-gradient(#fcfcfc,#ececec);border:1px solid #acacac;border-radius:3px"></div><div class="t" style="left:1295.00px;top:341.87px;font-size:11.5px;color:#000;font-weight:normal;;transform:scaleX(0.9572)">S2A_L2A_T33UUU_20190613_20m_9bands_berlin.tif</div><svg class="a" style="left:1583.5px;top:345.0px" width="9" height="5"><path d="M0 0 H8 L4 4.2 Z" fill="#5a5a5a"/></svg><svg class="a" style="left:1278px;top:338.5px" width="13" height="13"><rect x="0.00" y="0.00" width="4.38" height="4.38" fill="#1e2e44"/><rect x="4.33" y="0.00" width="4.38" height="4.38" fill="#b0c8e4"/><rect x="8.67" y="0.00" width="4.38" height="4.38" fill="#1e2e44"/><rect x="0.00" y="4.33" width="4.38" height="4.38" fill="#b0c8e4"/><rect x="4.33" y="4.33" width="4.38" height="4.38" fill="#1e2e44"/><rect x="8.67" y="4.33" width="4.38" height="4.38" fill="#b0c8e4"/><rect x="0.00" y="8.67" width="4.38" height="4.38" fill="#1e2e44"/><rect x="4.33" y="8.67" width="4.38" height="4.38" fill="#b0c8e4"/></svg><div class="a" style="left:1600px;top:332px;width:54px;height:30px;background:linear-gradient(#fcfcfc,#ececec);border:1px solid #acacac;border-radius:3px"></div><div class="t" style="left:1605.50px;top:341.87px;font-size:11.5px;color:#000;font-weight:normal;;transform:scaleX(0.9680)">Band</div><svg class="a" style="left:1638.5px;top:345.0px" width="9" height="5"><path d="M0 0 H8 L4 4.2 Z" fill="#5a5a5a"/></svg><div class="a" style="left:1654px;top:332px;width:100px;height:30px;background:linear-gradient(#fcfcfc,#ececec);border:1px solid #acacac;border-radius:2px"></div><svg class="a" style="left:1656px;top:333.7px" width="85" height="24"><rect width="85" height="24" fill="#000"/><path d="M0 19.5 L42.5 12 L85 17.5" fill="none" stroke="#ddff00" stroke-width="1.1" opacity="0.75"/><circle cx="42.5" cy="11.8" r="2.3" fill="#ddff00"/></svg><svg class="a" style="left:1744px;top:345px" width="9" height="5"><path d="M0 0 H8 L4 4.2 Z" fill="#5a5a5a"/></svg><div class="a" style="left:1755px;top:333px;width:99px;height:28px;background:#fff;border:1px solid #b4b4b4;border-radius:2px"></div><div class="t" style="left:1758.50px;top:341.87px;font-size:11.5px;color:#000;font-weight:normal;;transform:scaleX(1.0121)">0. + 1. * y</div><div class="a" style="left:1855px;top:335.5px;width:70px;height:22px;background:#fff;border:1px solid #acacac;border-radius:3px"></div><div class="a" style="left:1930px;top:335.5px;width:4px;height:22px;background:#fff;border:1px solid #acacac;border-right:none;border-radius:3px 0 0 3px"></div><div class="a" style="left:1259px;top:391px;width:675px;height:2px;background:#bdbdbd;"></div><div class="t" style="left:1261.00px;top:372.29px;font-size:11px;color:#000;font-weight:normal;;transform:scaleX(0.9796)">4</div><div class="a" style="left:1270px;top:362px;width:329px;height:30px;background:linear-gradient(#fcfcfc,#ececec);border:1px solid #acacac;border-radius:3px"></div><div class="t" style="left:1295.00px;top:371.87px;font-size:11.5px;color:#000;font-weight:normal;;transform:scaleX(0.9572)">S2A_L2A_T33UUU_20190726_20m_9bands_berlin.tif</div><svg class="a" style="left:1583.5px;top:375.0px" width="9" height="5"><path d="M0 0 H8 L4 4.2 Z" fill="#5a5a5a"/></svg><svg class="a" style="left:1278px;top:368.5px" width="13" height="13"><rect x="0.00" y="0.00" width="4.38" height="4.38" fill="#1e2e44"/><rect x="4.33" y="0.00" width="4.38" height="4.38" fill="#b0c8e4"/><rect x="8.67" y="0.00" width="4.38" height="4.38" fill="#1e2e44"/><rect x="0.00" y="4.33" width="4.38" height="4.38" fill="#b0c8e4"/><rect x="4.33" y="4.33" width="4.38" height="4.38" fill="#1e2e44"/><rect x="8.67" y="4.33" width="4.38" height="4.38" fill="#b0c8e4"/><rect x="0.00" y="8.67" width="4.38" height="4.38" fill="#1e2e44"/><rect x="4.33" y="8.67" width="4.38" height="4.38" fill="#b0c8e4"/></svg><div class="a" style="left:1600px;top:362px;width:54px;height:30px;background:linear-gradient(#fcfcfc,#ececec);border:1px solid #acacac;border-radius:3px"></div><div class="t" style="left:1605.50px;top:371.87px;font-size:11.5px;color:#000;font-weight:normal;;transform:scaleX(0.9680)">Band</div><svg class="a" style="left:1638.5px;top:375.0px" width="9" height="5"><path d="M0 0 H8 L4 4.2 Z" fill="#5a5a5a"/></svg><div class="a" style="left:1654px;top:362px;width:100px;height:30px;background:linear-gradient(#fcfcfc,#ececec);border:1px solid #acacac;border-radius:2px"></div><svg class="a" style="left:1656px;top:363.7px" width="85" height="24"><rect width="85" height="24" fill="#000"/><path d="M0 19.5 L42.5 12 L85 17.5" fill="none" stroke="#ffcc00" stroke-width="1.1" opacity="0.75"/><circle cx="42.5" cy="11.8" r="2.3" fill="#ffcc00"/></svg><svg class="a" style="left:1744px;top:375px" width="9" height="5"><path d="M0 0 H8 L4 4.2 Z" fill="#5a5a5a"/></svg><div class="a" style="left:1755px;top:363px;width:99px;height:28px;background:#fff;border:1px solid #b4b4b4;border-radius:2px"></div><div class="t" style="left:1758.50px;top:371.87px;font-size:11.5px;color:#000;font-weight:normal;;transform:scaleX(1.0121)">0. + 1. * y</div><div class="a" style="left:1855px;top:365.5px;width:70px;height:22px;background:#fff;border:1px solid #acacac;border-radius:3px"></div><div class="a" style="left:1930px;top:365.5px;width:4px;height:22px;background:#fff;border:1px solid #acacac;border-right:none;border-radius:3px 0 0 3px"></div><div class="a" style="left:1259px;top:421px;width:675px;height:2px;background:#bdbdbd;"></div><div class="t" style="left:1261.00px;top:402.29px;font-size:11px;color:#000;font-weight:normal;;transform:scaleX(0.9796)">5</div><div class="a" style="left:1270px;top:392px;width:329px;height:30px;background:linear-gradient(#fcfcfc,#ececec);border:1px solid #acacac;border-radius:3px"></div><div class="t" style="left:1295.00px;top:401.87px;font-size:11.5px;color:#000;font-weight:normal;;transform:scaleX(0.9572)">S2A_L2A_T33UUU_20190825_20m_9bands_berlin.tif</div><svg class="a" style="left:1583.5px;top:405.0px" width="9" height="5"><path d="M0 0 H8 L4 4.2 Z" fill="#5a5a5a"/></svg><svg class="a" style="left:1278px;top:398.5px" width="13" height="13"><rect x="0.00" y="0.00" width="4.38" height="4.38" fill="#1e2e44"/><rect x="4.33" y="0.00" width="4.38" height="4.38" fill="#b0c8e4"/><rect x="8.67" y="0.00" width="4.38" height="4.38" fill="#1e2e44"/><rect x="0.00" y="4.33" width="4.38" height="4.38" fill="#b0c8e4"/><rect x="4.33" y="4.33" width="4.38" height="4.38" fill="#1e2e44"/><rect x="8.67" y="4.33" width="4.38" height="4.38" fill="#b0c8e4"/><rect x="0.00" y="8.67" width="4.38" height="4.38" fill="#1e2e44"/><rect x="4.33" y="8.67" width="4.38" height="4.38" fill="#b0c8e4"/></svg><div class="a" style="left:1600px;top:392px;width:54px;height:30px;background:linear-gradient(#fcfcfc,#ececec);border:1px solid #acacac;border-radius:3px"></div><div class="t" style="left:1605.50px;top:401.87px;font-size:11.5px;color:#000;font-weight:normal;;transform:scaleX(0.9680)">Band</div><svg class="a" style="left:1638.5px;top:405.0px" width="9" height="5"><path d="M0 0 H8 L4 4.2 Z" fill="#5a5a5a"/></svg><div class="a" style="left:1654px;top:392px;width:100px;height:30px;background:linear-gradient(#fcfcfc,#ececec);border:1px solid #acacac;border-radius:2px"></div><svg class="a" style="left:1656px;top:393.7px" width="85" height="24"><rect width="85" height="24" fill="#000"/><path d="M0 19.5 L42.5 12 L85 17.5" fill="none" stroke="#ff8800" stroke-width="1.1" opacity="0.75"/><circle cx="42.5" cy="11.8" r="2.3" fill="#ff8800"/></svg><svg class="a" style="left:1744px;top:405px" width="9" height="5"><path d="M0 0 H8 L4 4.2 Z" fill="#5a5a5a"/></svg><div class="a" style="left:1755px;top:393px;width:99px;height:28px;background:#fff;border:1px solid #b4b4b4;border-radius:2px"></div><div class="t" style="left:1758.50px;top:401.87px;font-size:11.5px;color:#000;font-weight:normal;;transform:scaleX(1.0121)">0. + 1. * y</div><div class="a" style="left:1855px;top:395.5px;width:70px;height:22px;background:#fff;border:1px solid #acacac;border-radius:3px"></div><div class="a" style="left:1930px;top:395.5px;width:4px;height:22px;background:#fff;border:1px solid #acacac;border-right:none;border-radius:3px 0 0 3px"></div><div class="a" style="left:1259px;top:451px;width:675px;height:2px;background:#bdbdbd;"></div><div class="t" style="left:1261.00px;top:432.29px;font-size:11px;color:#000;font-weight:normal;;transform:scaleX(0.9796)">6</div><div class="a" style="left:1270px;top:422px;width:329px;height:30px;background:linear-gradient(#fcfcfc,#ececec);border:1px solid #acacac;border-radius:3px"></div><div class="t" style="left:1295.00px;top:431.87px;font-size:11.5px;color:#000;font-weight:normal;;transform:scaleX(0.9572)">S2A_L2A_T33UUU_20190921_20m_9bands_berlin.tif</div><svg class="a" style="left:1583.5px;top:435.0px" width="9" height="5"><path d="M0 0 H8 L4 4.2 Z" fill="#5a5a5a"/></svg><svg class="a" style="left:1278px;top:428.5px" width="13" height="13"><rect x="0.00" y="0.00" width="4.38" height="4.38" fill="#1e2e44"/><rect x="4.33" y="0.00" width="4.38" height="4.38" fill="#b0c8e4"/><rect x="8.67" y="0.00" width="4.38" height="4.38" fill="#1e2e44"/><rect x="0.00" y="4.33" width="4.38" height="4.38" fill="#b0c8e4"/><rect x="4.33" y="4.33" width="4.38" height="4.38" fill="#1e2e44"/><rect x="8.67" y="4.33" width="4.38" height="4.38" fill="#b0c8e4"/><rect x="0.00" y="8.67" width="4.38" height="4.38" fill="#1e2e44"/><rect x="4.33" y="8.67" width="4.38" height="4.38" fill="#b0c8e4"/></svg><div class="a" style="left:1600px;top:422px;width:54px;height:30px;background:linear-gradient(#fcfcfc,#ececec);border:1px solid #acacac;border-radius:3px"></div><div class="t" style="left:1605.50px;top:431.87px;font-size:11.5px;color:#000;font-weight:normal;;transform:scaleX(0.9680)">Band</div><svg class="a" style="left:1638.5px;top:435.0px" width="9" height="5"><path d="M0 0 H8 L4 4.2 Z" fill="#5a5a5a"/></svg><div class="a" style="left:1654px;top:422px;width:100px;height:30px;background:linear-gradient(#fcfcfc,#ececec);border:1px solid #acacac;border-radius:2px"></div><svg class="a" style="left:1656px;top:423.7px" width="85" height="24"><rect width="85" height="24" fill="#000"/><path d="M0 19.5 L42.5 12 L85 17.5" fill="none" stroke="#ff2200" stroke-width="1.1" opacity="0.75"/><circle cx="42.5" cy="11.8" r="2.3" fill="#ff2200"/></svg><svg class="a" style="left:1744px;top:435px" width="9" height="5"><path d="M0 0 H8 L4 4.2 Z" fill="#5a5a5a"/></svg><div class="a" style="left:1755px;top:423px;width:99px;height:28px;background:#fff;border:1px solid #b4b4b4;border-radius:2px"></div><div class="t" style="left:1758.50px;top:431.87px;font-size:11.5px;color:#000;font-weight:normal;;transform:scaleX(1.0121)">0. + 1. * y</div><div class="a" style="left:1855px;top:425.5px;width:70px;height:22px;background:#fff;border:1px solid #acacac;border-radius:3px"></div><div class="a" style="left:1930px;top:425.5px;width:4px;height:22px;background:#fff;border:1px solid #acacac;border-right:none;border-radius:3px 0 0 3px"></div><div class="a" style="left:1259px;top:481px;width:675px;height:2px;background:#bdbdbd;"></div><div class="t" style="left:1261.00px;top:462.29px;font-size:11px;color:#000;font-weight:normal;;transform:scaleX(0.9796)">7</div><div class="a" style="left:1270px;top:452px;width:329px;height:30px;background:linear-gradient(#fcfcfc,#ececec);border:1px solid #acacac;border-radius:3px"></div><div class="t" style="left:1295.00px;top:461.87px;font-size:11.5px;color:#000;font-weight:normal;;transform:scaleX(0.9572)">S2A_L2A_T33UUU_20191210_20m_9bands_berlin.tif</div><svg class="a" style="left:1583.5px;top:465.0px" width="9" height="5"><path d="M0 0 H8 L4 4.2 Z" fill="#5a5a5a"/></svg><svg class="a" style="left:1278px;top:458.5px" width="13" height="13"><rect x="0.00" y="0.00" width="4.38" height="4.38" fill="#1e2e44"/><rect x="4.33" y="0.00" width="4.38" height="4.38" fill="#b0c8e4"/><rect x="8.67" y="0.00" width="4.38" height="4.38" fill="#1e2e44"/><rect x="0.00" y="4.33" width="4.38" height="4.38" fill="#b0c8e4"/><rect x="4.33" y="4.33" width="4.38" height="4.38" fill="#1e2e44"/><rect x="8.67" y="4.33" width="4.38" height="4.38" fill="#b0c8e4"/><rect x="0.00" y="8.67" width="4.38" height="4.38" fill="#1e2e44"/><rect x="4.33" y="8.67" width="4.38" height="4.38" fill="#b0c8e4"/></svg><div class="a" style="left:1600px;top:452px;width:54px;height:30px;background:linear-gradient(#fcfcfc,#ececec);border:1px solid #acacac;border-radius:3px"></div><div class="t" style="left:1605.50px;top:461.87px;font-size:11.5px;color:#000;font-weight:normal;;transform:scaleX(0.9680)">Band</div><svg class="a" style="left:1638.5px;top:465.0px" width="9" height="5"><path d="M0 0 H8 L4 4.2 Z" fill="#5a5a5a"/></svg><div class="a" style="left:1654px;top:452px;width:100px;height:30px;background:linear-gradient(#fcfcfc,#ececec);border:1px solid #acacac;border-radius:2px"></div><svg class="a" style="left:1656px;top:453.7px" width="85" height="24"><rect width="85" height="24" fill="#000"/><path d="M0 19.5 L42.5 12 L85 17.5" fill="none" stroke="#ff00cc" stroke-width="1.1" opacity="0.75"/><circle cx="42.5" cy="11.8" r="2.3" fill="#ff00cc"/></svg><svg class="a" style="left:1744px;top:465px" width="9" height="5"><path d="M0 0 H8 L4 4.2 Z" fill="#5a5a5a"/></svg><div class="a" style="left:1755px;top:453px;width:99px;height:28px;background:#fff;border:1px solid #b4b4b4;border-radius:2px"></div><div class="t" style="left:1758.50px;top:461.87px;font-size:11.5px;color:#000;font-weight:normal;;transform:scaleX(1.0121)">0. + 1. * y</div><div class="a" style="left:1855px;top:455.5px;width:70px;height:22px;background:#fff;border:1px solid #acacac;border-radius:3px"></div><div class="a" style="left:1930px;top:455.5px;width:4px;height:22px;background:#fff;border:1px solid #acacac;border-right:none;border-radius:3px 0 0 3px"></div><div class="a" style="left:1259px;top:510px;width:675px;height:14px;background:linear-gradient(#f6f6f6,#ececec);border-top:1px solid #c8c8c8"></div><div class="a" style="left:1273px;top:511px;width:1px;height:13px;background:#d4d4d4;"></div><div class="a" style="left:1789px;top:511px;width:131px;height:13px;background:#e2e2e2;border-left:1px solid #cfcfcf;border-right:1px solid #cfcfcf"></div><svg class="a" style="left:1261px;top:513px" width="8" height="9"><path d="M5 0.5 V8.5 L1 4.5 Z" fill="#555"/></svg><svg class="a" style="left:1923px;top:513px" width="8" height="9"><path d="M1.5 0.5 V8.5 L5.5 4.5 Z" fill="#555"/></svg><div class="a" style="left:1258px;top:531px;width:24px;height:23px;background:linear-gradient(#fdfdfd,#ececec);border:1px solid #adadad;border-radius:3px"></div><svg class="a" style="left:1262px;top:535px" width="16" height="16"><path d="M5.5 1 H9.5 V5.5 H14 V9.5 H9.5 V14 H5.5 V9.5 H1 V5.5 H5.5 Z" fill="#e6f2e2" stroke="#4f8a48" stroke-width="1.4"/></svg><div class="a" style="left:1288px;top:531px;width:24px;height:23px;background:linear-gradient(#fdfdfd,#ececec);border:1px solid #adadad;border-radius:3px"></div><svg class="a" style="left:1292px;top:535px" width="16" height="16"><rect x="1.5" y="5.5" width="13" height="4.5" fill="#fff" stroke="#e03a3a" stroke-width="1.4"/></svg><div class="a" style="left:1626px;top:532px;width:308px;height:21px;background:linear-gradient(#fdfdfd,#ececec);border:1px solid #adadad;border-radius:3px"></div><div class="t" style="left:1753.00px;top:536.97px;font-size:11.5px;color:#000;font-weight:normal;;transform:scaleX(0.9111)">Remove All</div><svg class="a" style="left:1787.5px;top:584.5px" width="13" height="13"><rect x="0.5" y="0.5" width="12" height="12" fill="#fff" stroke="#8f8f8f" stroke-width="1"/><path d="M2.6 6.6 L5.2 9.8 L10.2 2.6" fill="none" stroke="#000" stroke-width="1.5"/></svg><div class="t" style="left:1805.00px;top:586.07px;font-size:11.5px;color:#000;font-weight:normal;;transform:scaleX(0.9417)">Live update</div><div class="a" style="left:1875px;top:581.5px;width:78px;height:20px;background:linear-gradient(#fdfdfd,#ececec);border:1px solid #adadad;border-radius:3px"></div><div class="t" style="left:1899.50px;top:586.47px;font-size:11.5px;color:#000;font-weight:normal;;transform:scaleX(0.9381)">Apply</div><div class="t" style="left:378.50px;top:586.27px;font-size:11.5px;color:#000;font-weight:normal;;transform:scaleX(0.9228)">X Axis</div><div class="a" style="left:414px;top:580.5px;width:155px;height:21px;background:linear-gradient(#fcfcfc,#ececec);border:1px solid #acacac;border-radius:3px"></div><div class="t" style="left:418.00px;top:586.27px;font-size:11.5px;color:#000;font-weight:normal;;transform:scaleX(0.9089)">Band Number</div><svg class="a" style="left:553px;top:589.0px" width="9" height="5"><path d="M0 0 H8 L4 4.2 Z" fill="#5a5a5a"/></svg><svg class="a" style="left:0;top:0" width="1955" height="620"><rect x="1159" y="604" width="1" height="1" fill="#b8b8b8"/><rect x="1162" y="604" width="1" height="1" fill="#b8b8b8"/><rect x="1165" y="604" width="1" height="1" fill="#b8b8b8"/><rect x="1168" y="604" width="1" height="1" fill="#b8b8b8"/><rect x="1171" y="604" width="1" height="1" fill="#b8b8b8"/><rect x="1174" y="604" width="1" height="1" fill="#b8b8b8"/><rect x="1236" y="337" width="1" height="1" fill="#a8a8a8"/><rect x="1236" y="340" width="1" height="1" fill="#a8a8a8"/><rect x="1236" y="343" width="1" height="1" fill="#a8a8a8"/><rect x="1236" y="346" width="1" height="1" fill="#a8a8a8"/><rect x="1236" y="349" width="1" height="1" fill="#a8a8a8"/><rect x="1236" y="352" width="1" height="1" fill="#a8a8a8"/><rect x="376" y="511" width="1" height="1" fill="#a8a8a8"/><rect x="376" y="514" width="1" height="1" fill="#a8a8a8"/><rect x="376" y="517" width="1" height="1" fill="#a8a8a8"/><rect x="376" y="520" width="1" height="1" fill="#a8a8a8"/><rect x="376" y="523" width="1" height="1" fill="#a8a8a8"/><rect x="376" y="526" width="1" height="1" fill="#a8a8a8"/></svg><div class="t" style="left:383.40px;top:98.44px;font-size:12px;color:#000;font-weight:normal;;transform:scaleX(1.0000)">Profile Analytics</div><div class="a" style="left:379px;top:608px;width:13px;height:333px;background:#6a64c8;border-radius:2px 0 0 2px"></div><svg class="a" style="left:379px;top:608px" width="13" height="30"><rect x="1.5" y="1.5" width="10" height="10" rx="1.5" fill="#f0f0f0" stroke="#8a8a8a" stroke-width="1"/><path d="M4 4 L9 9 M9 4 L4 9" stroke="#666" stroke-width="1.3"/><rect x="1.5" y="14.5" width="10" height="10" rx="1.5" fill="#f0f0f0" stroke="#8a8a8a" stroke-width="1"/><rect x="4.5" y="16.5" width="4" height="4" fill="none" stroke="#777" stroke-width="0.9"/><rect x="3.5" y="18.5" width="4" height="4" fill="#f0f0f0" stroke="#777" stroke-width="0.9"/></svg><div class="t" style="left:379px;top:766px;width:13px;height:30px;font-size:11px;color:#fff"><div style="position:absolute;left:0;top:0;transform:translate(1.5px,30px) rotate(-90deg);transform-origin:0 0;white-space:nowrap">Map #1</div></div><div class="a" style="left:392px;top:609px;width:1561px;height:332px;background:#000;"></div><svg class="a" style="left:0;top:0" width="1955" height="968" viewBox="0 0 1955 968"><defs><filter id="bl" x="-5%" y="-5%" width="110%" height="110%"><feGaussianBlur stdDeviation="6"/><feColorMatrix type="saturate" values="1.15"/></filter><filter id="sb" x="-5%" y="-5%" width="110%" height="110%"><feGaussianBlur stdDeviation="0.7"/></filter><filter id="nz" x="0" y="0" width="100%" height="100%"><feTurbulence type="fractalNoise" baseFrequency="0.55" numOctaves="2" seed="3"/><feColorMatrix values="0 0 0 0 0.55  0 0 0 0 0.68  0 0 0 0 0.95  2.6 0 0 0 -0.95"/></filter><filter id="nz2" x="0" y="0" width="100%" height="100%"><feTurbulence type="fractalNoise" baseFrequency="0.35" numOctaves="2" seed="11"/><feColorMatrix values="0 0 0 0 0  0 0 0 0 0  0 0 0 0 0  -2.4 0 0 0 1.05"/></filter><clipPath id="mc"><rect x="573" y="609" width="853" height="332"/></clipPath></defs><g clip-path="url(#mc)"><rect x="573" y="609" width="853" height="332" fill="#6a7060"/><g filter="url(#bl)"><rect x="543.0" y="579.0" width="57.3" height="51.4" fill="#d08c4a"/><rect x="599.7" y="579.0" width="27.3" height="51.4" fill="#d08c4a"/><rect x="626.3" y="579.0" width="27.3" height="51.4" fill="#a6a860"/><rect x="653.0" y="579.0" width="27.3" height="51.4" fill="#8ebe5e"/><rect x="679.6" y="579.0" width="27.3" height="51.4" fill="#8ebe5e"/><rect x="706.3" y="579.0" width="27.3" height="51.4" fill="#5a8646"/><rect x="732.9" y="579.0" width="27.3" height="51.4" fill="#4e4c3e"/><rect x="759.6" y="579.0" width="27.3" height="51.4" fill="#4e4c3e"/><rect x="786.2" y="579.0" width="27.3" height="51.4" fill="#a6a860"/><rect x="812.9" y="579.0" width="27.3" height="51.4" fill="#864c2e"/><rect x="839.6" y="579.0" width="27.3" height="51.4" fill="#864c2e"/><rect x="866.2" y="579.0" width="27.3" height="51.4" fill="#864c2e"/><rect x="892.9" y="579.0" width="27.3" height="51.4" fill="#864c2e"/><rect x="919.5" y="579.0" width="27.3" height="51.4" fill="#4e4c3e"/><rect x="946.2" y="579.0" width="27.3" height="51.4" fill="#864c2e"/><rect x="972.8" y="579.0" width="27.3" height="51.4" fill="#864c2e"/><rect x="999.5" y="579.0" width="27.3" height="51.4" fill="#3a4c56"/><rect x="1026.2" y="579.0" width="27.3" height="51.4" fill="#3a4c56"/><rect x="1052.8" y="579.0" width="27.3" height="51.4" fill="#3a4c56"/><rect x="1079.5" y="579.0" width="27.3" height="51.4" fill="#3a4c56"/><rect x="1106.1" y="579.0" width="27.3" height="51.4" fill="#3a4c56"/><rect x="1132.8" y="579.0" width="27.3" height="51.4" fill="#3a4c56"/><rect x="1159.4" y="579.0" width="27.3" height="51.4" fill="#3a4c56"/><rect x="1186.1" y="579.0" width="27.3" height="51.4" fill="#4e4c3e"/><rect x="1212.8" y="579.0" width="27.3" height="51.4" fill="#4e4c3e"/><rect x="1239.4" y="579.0" width="27.3" height="51.4" fill="#3a4c56"/><rect x="1266.1" y="579.0" width="27.3" height="51.4" fill="#4e4c3e"/><rect x="1292.7" y="579.0" width="27.3" height="51.4" fill="#8ebe5e"/><rect x="1319.4" y="579.0" width="27.3" height="51.4" fill="#d08c4a"/><rect x="1346.0" y="579.0" width="27.3" height="51.4" fill="#d08c4a"/><rect x="1372.7" y="579.0" width="27.3" height="51.4" fill="#d08c4a"/><rect x="1399.3" y="579.0" width="57.3" height="51.4" fill="#d08c4a"/><rect x="543.0" y="629.8" width="57.3" height="21.4" fill="#d08c4a"/><rect x="599.7" y="629.8" width="27.3" height="21.4" fill="#d08c4a"/><rect x="626.3" y="629.8" width="27.3" height="21.4" fill="#a6a860"/><rect x="653.0" y="629.8" width="27.3" height="21.4" fill="#3a4c56"/><rect x="679.6" y="629.8" width="27.3" height="21.4" fill="#8ebe5e"/><rect x="706.3" y="629.8" width="27.3" height="21.4" fill="#8ebe5e"/><rect x="732.9" y="629.8" width="27.3" height="21.4" fill="#4e4c3e"/><rect x="759.6" y="629.8" width="27.3" height="21.4" fill="#4e4c3e"/><rect x="786.2" y="629.8" width="27.3" height="21.4" fill="#8ebe5e"/><rect x="812.9" y="629.8" width="27.3" height="21.4" fill="#864c2e"/><rect x="839.6" y="629.8" width="27.3" height="21.4" fill="#864c2e"/><rect x="866.2" y="629.8" width="27.3" height="21.4" fill="#864c2e"/><rect x="892.9" y="629.8" width="27.3" height="21.4" fill="#864c2e"/><rect x="919.5" y="629.8" width="27.3" height="21.4" fill="#4e4c3e"/><rect x="946.2" y="629.8" width="27.3" height="21.4" fill="#4e4c3e"/><rect x="972.8" y="629.8" width="27.3" height="21.4" fill="#864c2e"/><rect x="999.5" y="629.8" width="27.3" height="21.4" fill="#8ebe5e"/><rect x="1026.2" y="629.8" width="27.3" height="21.4" fill="#8ebe5e"/><rect x="1052.8" y="629.8" width="27.3" height="21.4" fill="#3a4c56"/><rect x="1079.5" y="629.8" width="27.3" height="21.4" fill="#3a4c56"/><rect x="1106.1" y="629.8" width="27.3" height="21.4" fill="#3a4c56"/><rect x="1132.8" y="629.8" width="27.3" height="21.4" fill="#3a4c56"/><rect x="1159.4" y="629.8" width="27.3" height="21.4" fill="#3a4c56"/><rect x="1186.1" y="629.8" width="27.3" height="21.4" fill="#4e4c3e"/><rect x="1212.8" y="629.8" width="27.3" height="21.4" fill="#4e4c3e"/><rect x="1239.4" y="629.8" width="27.3" height="21.4" fill="#3a4c56"/><rect x="1266.1" y="629.8" width="27.3" height="21.4" fill="#3a4c56"/><rect x="1292.7" y="629.8" width="27.3" height="21.4" fill="#3a4c56"/><rect x="1319.4" y="629.8" width="27.3" height="21.4" fill="#a6a860"/><rect x="1346.0" y="629.8" width="27.3" height="21.4" fill="#d08c4a"/><rect x="1372.7" y="629.8" width="27.3" height="21.4" fill="#d08c4a"/><rect x="1399.3" y="629.8" width="57.3" height="21.4" fill="#d08c4a"/><rect x="543.0" y="650.5" width="57.3" height="21.4" fill="#d08c4a"/><rect x="599.7" y="650.5" width="27.3" height="21.4" fill="#a6a860"/><rect x="626.3" y="650.5" width="27.3" height="21.4" fill="#a6a860"/><rect x="653.0" y="650.5" width="27.3" height="21.4" fill="#8ebe5e"/><rect x="679.6" y="650.5" width="27.3" height="21.4" fill="#5a8646"/><rect x="706.3" y="650.5" width="27.3" height="21.4" fill="#a6a860"/><rect x="732.9" y="650.5" width="27.3" height="21.4" fill="#4e4c3e"/><rect x="759.6" y="650.5" width="27.3" height="21.4" fill="#4e4c3e"/><rect x="786.2" y="650.5" width="27.3" height="21.4" fill="#4e4c3e"/><rect x="812.9" y="650.5" width="27.3" height="21.4" fill="#3a4c56"/><rect x="839.6" y="650.5" width="27.3" height="21.4" fill="#4e4c3e"/><rect x="866.2" y="650.5" width="27.3" height="21.4" fill="#864c2e"/><rect x="892.9" y="650.5" width="27.3" height="21.4" fill="#4e4c3e"/><rect x="919.5" y="650.5" width="27.3" height="21.4" fill="#4e4c3e"/><rect x="946.2" y="650.5" width="27.3" height="21.4" fill="#3a4c56"/><rect x="972.8" y="650.5" width="27.3" height="21.4" fill="#8ebe5e"/><rect x="999.5" y="650.5" width="27.3" height="21.4" fill="#4e4c3e"/><rect x="1026.2" y="650.5" width="27.3" height="21.4" fill="#4e4c3e"/><rect x="1052.8" y="650.5" width="27.3" height="21.4" fill="#4e4c3e"/><rect x="1079.5" y="650.5" width="27.3" height="21.4" fill="#3a4c56"/><rect x="1106.1" y="650.5" width="27.3" height="21.4" fill="#3a4c56"/><rect x="1132.8" y="650.5" width="27.3" height="21.4" fill="#3a4c56"/><rect x="1159.4" y="650.5" width="27.3" height="21.4" fill="#3a4c56"/><rect x="1186.1" y="650.5" width="27.3" height="21.4" fill="#3a4c56"/><rect x="1212.8" y="650.5" width="27.3" height="21.4" fill="#3a4c56"/><rect x="1239.4" y="650.5" width="27.3" height="21.4" fill="#3a4c56"/><rect x="1266.1" y="650.5" width="27.3" height="21.4" fill="#8ebe5e"/><rect x="1292.7" y="650.5" width="27.3" height="21.4" fill="#3a4c56"/><rect x="1319.4" y="650.5" width="27.3" height="21.4" fill="#3a4c56"/><rect x="1346.0" y="650.5" width="27.3" height="21.4" fill="#d08c4a"/><rect x="1372.7" y="650.5" width="27.3" height="21.4" fill="#d08c4a"/><rect x="1399.3" y="650.5" width="57.3" height="21.4" fill="#d08c4a"/><rect x="543.0" y="671.2" width="57.3" height="21.4" fill="#a6a860"/><rect x="599.7" y="671.2" width="27.3" height="21.4" fill="#a6a860"/><rect x="626.3" y="671.2" width="27.3" height="21.4" fill="#8ebe5e"/><rect x="653.0" y="671.2" width="27.3" height="21.4" fill="#a6a860"/><rect x="679.6" y="671.2" width="27.3" height="21.4" fill="#4e4c3e"/><rect x="706.3" y="671.2" width="27.3" height="21.4" fill="#4e4c3e"/><rect x="732.9" y="671.2" width="27.3" height="21.4" fill="#a6a860"/><rect x="759.6" y="671.2" width="27.3" height="21.4" fill="#a6a860"/><rect x="786.2" y="671.2" width="27.3" height="21.4" fill="#a6a860"/><rect x="812.9" y="671.2" width="27.3" height="21.4" fill="#3a4c56"/><rect x="839.6" y="671.2" width="27.3" height="21.4" fill="#3a4c56"/><rect x="866.2" y="671.2" width="27.3" height="21.4" fill="#3a4c56"/><rect x="892.9" y="671.2" width="27.3" height="21.4" fill="#3a4c56"/><rect x="919.5" y="671.2" width="27.3" height="21.4" fill="#3a4c56"/><rect x="946.2" y="671.2" width="27.3" height="21.4" fill="#3a4c56"/><rect x="972.8" y="671.2" width="27.3" height="21.4" fill="#4e4c3e"/><rect x="999.5" y="671.2" width="27.3" height="21.4" fill="#4e4c3e"/><rect x="1026.2" y="671.2" width="27.3" height="21.4" fill="#4e4c3e"/><rect x="1052.8" y="671.2" width="27.3" height="21.4" fill="#3a4c56"/><rect x="1079.5" y="671.2" width="27.3" height="21.4" fill="#3a4c56"/><rect x="1106.1" y="671.2" width="27.3" height="21.4" fill="#3a4c56"/><rect x="1132.8" y="671.2" width="27.3" height="21.4" fill="#3a4c56"/><rect x="1159.4" y="671.2" width="27.3" height="21.4" fill="#3a4c56"/><rect x="1186.1" y="671.2" width="27.3" height="21.4" fill="#3a4c56"/><rect x="1212.8" y="671.2" width="27.3" height="21.4" fill="#3a4c56"/><rect x="1239.4" y="671.2" width="27.3" height="21.4" fill="#3a4c56"/><rect x="1266.1" y="671.2" width="27.3" height="21.4" fill="#4e4c3e"/><rect x="1292.7" y="671.2" width="27.3" height="21.4" fill="#3a4c56"/><rect x="1319.4" y="671.2" width="27.3" height="21.4" fill="#3a4c56"/><rect x="1346.0" y="671.2" width="27.3" height="21.4" fill="#a6a860"/><rect x="1372.7" y="671.2" width="27.3" height="21.4" fill="#a6a860"/><rect x="1399.3" y="671.2" width="57.3" height="21.4" fill="#d08c4a"/><rect x="543.0" y="692.0" width="57.3" height="21.4" fill="#a6a860"/><rect x="599.7" y="692.0" width="27.3" height="21.4" fill="#a6a860"/><rect x="626.3" y="692.0" width="27.3" height="21.4" fill="#8ebe5e"/><rect x="653.0" y="692.0" width="27.3" height="21.4" fill="#8ebe5e"/><rect x="679.6" y="692.0" width="27.3" height="21.4" fill="#5a8646"/><rect x="706.3" y="692.0" width="27.3" height="21.4" fill="#5a8646"/><rect x="732.9" y="692.0" width="27.3" height="21.4" fill="#5a8646"/><rect x="759.6" y="692.0" width="27.3" height="21.4" fill="#8ebe5e"/><rect x="786.2" y="692.0" width="27.3" height="21.4" fill="#a6a860"/><rect x="812.9" y="692.0" width="27.3" height="21.4" fill="#3a4c56"/><rect x="839.6" y="692.0" width="27.3" height="21.4" fill="#3a4c56"/><rect x="866.2" y="692.0" width="27.3" height="21.4" fill="#3a4c56"/><rect x="892.9" y="692.0" width="27.3" height="21.4" fill="#3a4c56"/><rect x="919.5" y="692.0" width="27.3" height="21.4" fill="#3a4c56"/><rect x="946.2" y="692.0" width="27.3" height="21.4" fill="#3a4c56"/><rect x="972.8" y="692.0" width="27.3" height="21.4" fill="#4e4c3e"/><rect x="999.5" y="692.0" width="27.3" height="21.4" fill="#3a4c56"/><rect x="1026.2" y="692.0" width="27.3" height="21.4" fill="#3a4c56"/><rect x="1052.8" y="692.0" width="27.3" height="21.4" fill="#3a4c56"/><rect x="1079.5" y="692.0" width="27.3" height="21.4" fill="#3a4c56"/><rect x="1106.1" y="692.0" width="27.3" height="21.4" fill="#3a4c56"/><rect x="1132.8" y="692.0" width="27.3" height="21.4" fill="#3a4c56"/><rect x="1159.4" y="692.0" width="27.3" height="21.4" fill="#3a4c56"/><rect x="1186.1" y="692.0" width="27.3" height="21.4" fill="#3a4c56"/><rect x="1212.8" y="692.0" width="27.3" height="21.4" fill="#3a4c56"/><rect x="1239.4" y="692.0" width="27.3" height="21.4" fill="#3a4c56"/><rect x="1266.1" y="692.0" width="27.3" height="21.4" fill="#3a4c56"/><rect x="1292.7" y="692.0" width="27.3" height="21.4" fill="#4e4c3e"/><rect x="1319.4" y="692.0" width="27.3" height="21.4" fill="#3a4c56"/><rect x="1346.0" y="692.0" width="27.3" height="21.4" fill="#3a4c56"/><rect x="1372.7" y="692.0" width="27.3" height="21.4" fill="#4e4c3e"/><rect x="1399.3" y="692.0" width="57.3" height="21.4" fill="#a6a860"/><rect x="543.0" y="712.8" width="57.3" height="21.4" fill="#d08c4a"/><rect x="599.7" y="712.8" width="27.3" height="21.4" fill="#a6a860"/><rect x="626.3" y="712.8" width="27.3" height="21.4" fill="#8ebe5e"/><rect x="653.0" y="712.8" width="27.3" height="21.4" fill="#8ebe5e"/><rect x="679.6" y="712.8" width="27.3" height="21.4" fill="#5a8646"/><rect x="706.3" y="712.8" width="27.3" height="21.4" fill="#5a8646"/><rect x="732.9" y="712.8" width="27.3" height="21.4" fill="#5a8646"/><rect x="759.6" y="712.8" width="27.3" height="21.4" fill="#5a8646"/><rect x="786.2" y="712.8" width="27.3" height="21.4" fill="#d08c4a"/><rect x="812.9" y="712.8" width="27.3" height="21.4" fill="#4e4c3e"/><rect x="839.6" y="712.8" width="27.3" height="21.4" fill="#3a4c56"/><rect x="866.2" y="712.8" width="27.3" height="21.4" fill="#3a4c56"/><rect x="892.9" y="712.8" width="27.3" height="21.4" fill="#3a4c56"/><rect x="919.5" y="712.8" width="27.3" height="21.4" fill="#4e4c3e"/><rect x="946.2" y="712.8" width="27.3" height="21.4" fill="#4e4c3e"/><rect x="972.8" y="712.8" width="27.3" height="21.4" fill="#3a4c56"/><rect x="999.5" y="712.8" width="27.3" height="21.4" fill="#3a4c56"/><rect x="1026.2" y="712.8" width="27.3" height="21.4" fill="#3a4c56"/><rect x="1052.8" y="712.8" width="27.3" height="21.4" fill="#3a4c56"/><rect x="1079.5" y="712.8" width="27.3" height="21.4" fill="#3a4c56"/><rect x="1106.1" y="712.8" width="27.3" height="21.4" fill="#3a4c56"/><rect x="1132.8" y="712.8" width="27.3" height="21.4" fill="#3a4c56"/><rect x="1159.4" y="712.8" width="27.3" height="21.4" fill="#3a4c56"/><rect x="1186.1" y="712.8" width="27.3" height="21.4" fill="#3a4c56"/><rect x="1212.8" y="712.8" width="27.3" height="21.4" fill="#3a4c56"/><rect x="1239.4" y="712.8" width="27.3" height="21.4" fill="#3a4c56"/><rect x="1266.1" y="712.8" width="27.3" height="21.4" fill="#3a4c56"/><rect x="1292.7" y="712.8" width="27.3" height="21.4" fill="#4e4c3e"/><rect x="1319.4" y="712.8" width="27.3" height="21.4" fill="#4e4c3e"/><rect x="1346.0" y="712.8" width="27.3" height="21.4" fill="#4e4c3e"/><rect x="1372.7" y="712.8" width="27.3" height="21.4" fill="#4e4c3e"/><rect x="1399.3" y="712.8" width="57.3" height="21.4" fill="#4e4c3e"/><rect x="543.0" y="733.5" width="57.3" height="21.4" fill="#d08c4a"/><rect x="599.7" y="733.5" width="27.3" height="21.4" fill="#a6a860"/><rect x="626.3" y="733.5" width="27.3" height="21.4" fill="#a6a860"/><rect x="653.0" y="733.5" width="27.3" height="21.4" fill="#8ebe5e"/><rect x="679.6" y="733.5" width="27.3" height="21.4" fill="#5a8646"/><rect x="706.3" y="733.5" width="27.3" height="21.4" fill="#5a8646"/><rect x="732.9" y="733.5" width="27.3" height="21.4" fill="#5a8646"/><rect x="759.6" y="733.5" width="27.3" height="21.4" fill="#5a8646"/><rect x="786.2" y="733.5" width="27.3" height="21.4" fill="#d08c4a"/><rect x="812.9" y="733.5" width="27.3" height="21.4" fill="#d08c4a"/><rect x="839.6" y="733.5" width="27.3" height="21.4" fill="#a6a860"/><rect x="866.2" y="733.5" width="27.3" height="21.4" fill="#4e4c3e"/><rect x="892.9" y="733.5" width="27.3" height="21.4" fill="#864c2e"/><rect x="919.5" y="733.5" width="27.3" height="21.4" fill="#3a4c56"/><rect x="946.2" y="733.5" width="27.3" height="21.4" fill="#4e4c3e"/><rect x="972.8" y="733.5" width="27.3" height="21.4" fill="#3a4c56"/><rect x="999.5" y="733.5" width="27.3" height="21.4" fill="#3a4c56"/><rect x="1026.2" y="733.5" width="27.3" height="21.4" fill="#3a4c56"/><rect x="1052.8" y="733.5" width="27.3" height="21.4" fill="#3a4c56"/><rect x="1079.5" y="733.5" width="27.3" height="21.4" fill="#3a4c56"/><rect x="1106.1" y="733.5" width="27.3" height="21.4" fill="#3a4c56"/><rect x="1132.8" y="733.5" width="27.3" height="21.4" fill="#3a4c56"/><rect x="1159.4" y="733.5" width="27.3" height="21.4" fill="#3a4c56"/><rect x="1186.1" y="733.5" width="27.3" height="21.4" fill="#3a4c56"/><rect x="1212.8" y="733.5" width="27.3" height="21.4" fill="#3a4c56"/><rect x="1239.4" y="733.5" width="27.3" height="21.4" fill="#3a4c56"/><rect x="1266.1" y="733.5" width="27.3" height="21.4" fill="#4e4c3e"/><rect x="1292.7" y="733.5" width="27.3" height="21.4" fill="#4e4c3e"/><rect x="1319.4" y="733.5" width="27.3" height="21.4" fill="#4e4c3e"/><rect x="1346.0" y="733.5" width="27.3" height="21.4" fill="#4e4c3e"/><rect x="1372.7" y="733.5" width="27.3" height="21.4" fill="#4e4c3e"/><rect x="1399.3" y="733.5" width="57.3" height="21.4" fill="#4e4c3e"/><rect x="543.0" y="754.2" width="57.3" height="21.4" fill="#d08c4a"/><rect x="599.7" y="754.2" width="27.3" height="21.4" fill="#a6a860"/><rect x="626.3" y="754.2" width="27.3" height="21.4" fill="#a6a860"/><rect x="653.0" y="754.2" width="27.3" height="21.4" fill="#8ebe5e"/><rect x="679.6" y="754.2" width="27.3" height="21.4" fill="#5a8646"/><rect x="706.3" y="754.2" width="27.3" height="21.4" fill="#5a8646"/><rect x="732.9" y="754.2" width="27.3" height="21.4" fill="#5a8646"/><rect x="759.6" y="754.2" width="27.3" height="21.4" fill="#a6a860"/><rect x="786.2" y="754.2" width="27.3" height="21.4" fill="#a6a860"/><rect x="812.9" y="754.2" width="27.3" height="21.4" fill="#a6a860"/><rect x="839.6" y="754.2" width="27.3" height="21.4" fill="#8ebe5e"/><rect x="866.2" y="754.2" width="27.3" height="21.4" fill="#4e4c3e"/><rect x="892.9" y="754.2" width="27.3" height="21.4" fill="#864c2e"/><rect x="919.5" y="754.2" width="27.3" height="21.4" fill="#864c2e"/><rect x="946.2" y="754.2" width="27.3" height="21.4" fill="#4e4c3e"/><rect x="972.8" y="754.2" width="27.3" height="21.4" fill="#3a4c56"/><rect x="999.5" y="754.2" width="27.3" height="21.4" fill="#3a4c56"/><rect x="1026.2" y="754.2" width="27.3" height="21.4" fill="#3a4c56"/><rect x="1052.8" y="754.2" width="27.3" height="21.4" fill="#3a4c56"/><rect x="1079.5" y="754.2" width="27.3" height="21.4" fill="#3a4c56"/><rect x="1106.1" y="754.2" width="27.3" height="21.4" fill="#3a4c56"/><rect x="1132.8" y="754.2" width="27.3" height="21.4" fill="#3a4c56"/><rect x="1159.4" y="754.2" width="27.3" height="21.4" fill="#3a4c56"/><rect x="1186.1" y="754.2" width="27.3" height="21.4" fill="#3a4c56"/><rect x="1212.8" y="754.2" width="27.3" height="21.4" fill="#3a4c56"/><rect x="1239.4" y="754.2" width="27.3" height="21.4" fill="#3a4c56"/><rect x="1266.1" y="754.2" width="27.3" height="21.4" fill="#4e4c3e"/><rect x="1292.7" y="754.2" width="27.3" height="21.4" fill="#4e4c3e"/><rect x="1319.4" y="754.2" width="27.3" height="21.4" fill="#4e4c3e"/><rect x="1346.0" y="754.2" width="27.3" height="21.4" fill="#3a4c56"/><rect x="1372.7" y="754.2" width="27.3" height="21.4" fill="#4e4c3e"/><rect x="1399.3" y="754.2" width="57.3" height="21.4" fill="#4e4c3e"/><rect x="543.0" y="775.0" width="57.3" height="21.4" fill="#a6a860"/><rect x="599.7" y="775.0" width="27.3" height="21.4" fill="#d08c4a"/><rect x="626.3" y="775.0" width="27.3" height="21.4" fill="#d08c4a"/><rect x="653.0" y="775.0" width="27.3" height="21.4" fill="#a6a860"/><rect x="679.6" y="775.0" width="27.3" height="21.4" fill="#8ebe5e"/><rect x="706.3" y="775.0" width="27.3" height="21.4" fill="#4e4c3e"/><rect x="732.9" y="775.0" width="27.3" height="21.4" fill="#5a8646"/><rect x="759.6" y="775.0" width="27.3" height="21.4" fill="#864c2e"/><rect x="786.2" y="775.0" width="27.3" height="21.4" fill="#d08c4a"/><rect x="812.9" y="775.0" width="27.3" height="21.4" fill="#d08c4a"/><rect x="839.6" y="775.0" width="27.3" height="21.4" fill="#d08c4a"/><rect x="866.2" y="775.0" width="27.3" height="21.4" fill="#864c2e"/><rect x="892.9" y="775.0" width="27.3" height="21.4" fill="#864c2e"/><rect x="919.5" y="775.0" width="27.3" height="21.4" fill="#864c2e"/><rect x="946.2" y="775.0" width="27.3" height="21.4" fill="#864c2e"/><rect x="972.8" y="775.0" width="27.3" height="21.4" fill="#4e4c3e"/><rect x="999.5" y="775.0" width="27.3" height="21.4" fill="#3a4c56"/><rect x="1026.2" y="775.0" width="27.3" height="21.4" fill="#3a4c56"/><rect x="1052.8" y="775.0" width="27.3" height="21.4" fill="#3a4c56"/><rect x="1079.5" y="775.0" width="27.3" height="21.4" fill="#3a4c56"/><rect x="1106.1" y="775.0" width="27.3" height="21.4" fill="#3a4c56"/><rect x="1132.8" y="775.0" width="27.3" height="21.4" fill="#3a4c56"/><rect x="1159.4" y="775.0" width="27.3" height="21.4" fill="#3a4c56"/><rect x="1186.1" y="775.0" width="27.3" height="21.4" fill="#3a4c56"/><rect x="1212.8" y="775.0" width="27.3" height="21.4" fill="#3a4c56"/><rect x="1239.4" y="775.0" width="27.3" height="21.4" fill="#3a4c56"/><rect x="1266.1" y="775.0" width="27.3" height="21.4" fill="#4e4c3e"/><rect x="1292.7" y="775.0" width="27.3" height="21.4" fill="#3a4c56"/><rect x="1319.4" y="775.0" width="27.3" height="21.4" fill="#4e4c3e"/><rect x="1346.0" y="775.0" width="27.3" height="21.4" fill="#4e4c3e"/><rect x="1372.7" y="775.0" width="27.3" height="21.4" fill="#4e4c3e"/><rect x="1399.3" y="775.0" width="57.3" height="21.4" fill="#a6a860"/><rect x="543.0" y="795.8" width="57.3" height="21.4" fill="#a6a860"/><rect x="599.7" y="795.8" width="27.3" height="21.4" fill="#d08c4a"/><rect x="626.3" y="795.8" width="27.3" height="21.4" fill="#d08c4a"/><rect x="653.0" y="795.8" width="27.3" height="21.4" fill="#8ebe5e"/><rect x="679.6" y="795.8" width="27.3" height="21.4" fill="#a6a860"/><rect x="706.3" y="795.8" width="27.3" height="21.4" fill="#5a8646"/><rect x="732.9" y="795.8" width="27.3" height="21.4" fill="#5a8646"/><rect x="759.6" y="795.8" width="27.3" height="21.4" fill="#864c2e"/><rect x="786.2" y="795.8" width="27.3" height="21.4" fill="#3a4c56"/><rect x="812.9" y="795.8" width="27.3" height="21.4" fill="#8ebe5e"/><rect x="839.6" y="795.8" width="27.3" height="21.4" fill="#5a8646"/><rect x="866.2" y="795.8" width="27.3" height="21.4" fill="#864c2e"/><rect x="892.9" y="795.8" width="27.3" height="21.4" fill="#864c2e"/><rect x="919.5" y="795.8" width="27.3" height="21.4" fill="#864c2e"/><rect x="946.2" y="795.8" width="27.3" height="21.4" fill="#864c2e"/><rect x="972.8" y="795.8" width="27.3" height="21.4" fill="#4e4c3e"/><rect x="999.5" y="795.8" width="27.3" height="21.4" fill="#3a4c56"/><rect x="1026.2" y="795.8" width="27.3" height="21.4" fill="#3a4c56"/><rect x="1052.8" y="795.8" width="27.3" height="21.4" fill="#3a4c56"/><rect x="1079.5" y="795.8" width="27.3" height="21.4" fill="#3a4c56"/><rect x="1106.1" y="795.8" width="27.3" height="21.4" fill="#8ebe5e"/><rect x="1132.8" y="795.8" width="27.3" height="21.4" fill="#8ebe5e"/><rect x="1159.4" y="795.8" width="27.3" height="21.4" fill="#3a4c56"/><rect x="1186.1" y="795.8" width="27.3" height="21.4" fill="#3a4c56"/><rect x="1212.8" y="795.8" width="27.3" height="21.4" fill="#3a4c56"/><rect x="1239.4" y="795.8" width="27.3" height="21.4" fill="#4e4c3e"/><rect x="1266.1" y="795.8" width="27.3" height="21.4" fill="#4e4c3e"/><rect x="1292.7" y="795.8" width="27.3" height="21.4" fill="#4e4c3e"/><rect x="1319.4" y="795.8" width="27.3" height="21.4" fill="#864c2e"/><rect x="1346.0" y="795.8" width="27.3" height="21.4" fill="#4e4c3e"/><rect x="1372.7" y="795.8" width="27.3" height="21.4" fill="#8ebe5e"/><rect x="1399.3" y="795.8" width="57.3" height="21.4" fill="#4e4c3e"/><rect x="543.0" y="816.5" width="57.3" height="21.4" fill="#a6a860"/><rect x="599.7" y="816.5" width="27.3" height="21.4" fill="#a6a860"/><rect x="626.3" y="816.5" width="27.3" height="21.4" fill="#a6a860"/><rect x="653.0" y="816.5" width="27.3" height="21.4" fill="#8ebe5e"/><rect x="679.6" y="816.5" width="27.3" height="21.4" fill="#a6a860"/><rect x="706.3" y="816.5" width="27.3" height="21.4" fill="#5a8646"/><rect x="732.9" y="816.5" width="27.3" height="21.4" fill="#864c2e"/><rect x="759.6" y="816.5" width="27.3" height="21.4" fill="#864c2e"/><rect x="786.2" y="816.5" width="27.3" height="21.4" fill="#4e4c3e"/><rect x="812.9" y="816.5" width="27.3" height="21.4" fill="#8ebe5e"/><rect x="839.6" y="816.5" width="27.3" height="21.4" fill="#4e4c3e"/><rect x="866.2" y="816.5" width="27.3" height="21.4" fill="#864c2e"/><rect x="892.9" y="816.5" width="27.3" height="21.4" fill="#864c2e"/><rect x="919.5" y="816.5" width="27.3" height="21.4" fill="#864c2e"/><rect x="946.2" y="816.5" width="27.3" height="21.4" fill="#864c2e"/><rect x="972.8" y="816.5" width="27.3" height="21.4" fill="#3a4c56"/><rect x="999.5" y="816.5" width="27.3" height="21.4" fill="#3a4c56"/><rect x="1026.2" y="816.5" width="27.3" height="21.4" fill="#3a4c56"/><rect x="1052.8" y="816.5" width="27.3" height="21.4" fill="#4e4c3e"/><rect x="1079.5" y="816.5" width="27.3" height="21.4" fill="#3a4c56"/><rect x="1106.1" y="816.5" width="27.3" height="21.4" fill="#8ebe5e"/><rect x="1132.8" y="816.5" width="27.3" height="21.4" fill="#3a4c56"/><rect x="1159.4" y="816.5" width="27.3" height="21.4" fill="#3a4c56"/><rect x="1186.1" y="816.5" width="27.3" height="21.4" fill="#3a4c56"/><rect x="1212.8" y="816.5" width="27.3" height="21.4" fill="#3a4c56"/><rect x="1239.4" y="816.5" width="27.3" height="21.4" fill="#4e4c3e"/><rect x="1266.1" y="816.5" width="27.3" height="21.4" fill="#4e4c3e"/><rect x="1292.7" y="816.5" width="27.3" height="21.4" fill="#4e4c3e"/><rect x="1319.4" y="816.5" width="27.3" height="21.4" fill="#864c2e"/><rect x="1346.0" y="816.5" width="27.3" height="21.4" fill="#864c2e"/><rect x="1372.7" y="816.5" width="27.3" height="21.4" fill="#864c2e"/><rect x="1399.3" y="816.5" width="57.3" height="21.4" fill="#864c2e"/><rect x="543.0" y="837.2" width="57.3" height="21.4" fill="#a6a860"/><rect x="599.7" y="837.2" width="27.3" height="21.4" fill="#a6a860"/><rect x="626.3" y="837.2" width="27.3" height="21.4" fill="#a6a860"/><rect x="653.0" y="837.2" width="27.3" height="21.4" fill="#8ebe5e"/><rect x="679.6" y="837.2" width="27.3" height="21.4" fill="#a6a860"/><rect x="706.3" y="837.2" width="27.3" height="21.4" fill="#5a8646"/><rect x="732.9" y="837.2" width="27.3" height="21.4" fill="#864c2e"/><rect x="759.6" y="837.2" width="27.3" height="21.4" fill="#864c2e"/><rect x="786.2" y="837.2" width="27.3" height="21.4" fill="#864c2e"/><rect x="812.9" y="837.2" width="27.3" height="21.4" fill="#4e4c3e"/><rect x="839.6" y="837.2" width="27.3" height="21.4" fill="#864c2e"/><rect x="866.2" y="837.2" width="27.3" height="21.4" fill="#864c2e"/><rect x="892.9" y="837.2" width="27.3" height="21.4" fill="#864c2e"/><rect x="919.5" y="837.2" width="27.3" height="21.4" fill="#864c2e"/><rect x="946.2" y="837.2" width="27.3" height="21.4" fill="#864c2e"/><rect x="972.8" y="837.2" width="27.3" height="21.4" fill="#3a4c56"/><rect x="999.5" y="837.2" width="27.3" height="21.4" fill="#3a4c56"/><rect x="1026.2" y="837.2" width="27.3" height="21.4" fill="#3a4c56"/><rect x="1052.8" y="837.2" width="27.3" height="21.4" fill="#4e4c3e"/><rect x="1079.5" y="837.2" width="27.3" height="21.4" fill="#4e4c3e"/><rect x="1106.1" y="837.2" width="27.3" height="21.4" fill="#3a4c56"/><rect x="1132.8" y="837.2" width="27.3" height="21.4" fill="#3a4c56"/><rect x="1159.4" y="837.2" width="27.3" height="21.4" fill="#3a4c56"/><rect x="1186.1" y="837.2" width="27.3" height="21.4" fill="#3a4c56"/><rect x="1212.8" y="837.2" width="27.3" height="21.4" fill="#4e4c3e"/><rect x="1239.4" y="837.2" width="27.3" height="21.4" fill="#3a4c56"/><rect x="1266.1" y="837.2" width="27.3" height="21.4" fill="#4e4c3e"/><rect x="1292.7" y="837.2" width="27.3" height="21.4" fill="#3a4c56"/><rect x="1319.4" y="837.2" width="27.3" height="21.4" fill="#864c2e"/><rect x="1346.0" y="837.2" width="27.3" height="21.4" fill="#864c2e"/><rect x="1372.7" y="837.2" width="27.3" height="21.4" fill="#864c2e"/><rect x="1399.3" y="837.2" width="57.3" height="21.4" fill="#864c2e"/><rect x="543.0" y="858.0" width="57.3" height="21.4" fill="#a6a860"/><rect x="599.7" y="858.0" width="27.3" height="21.4" fill="#a6a860"/><rect x="626.3" y="858.0" width="27.3" height="21.4" fill="#8ebe5e"/><rect x="653.0" y="858.0" width="27.3" height="21.4" fill="#8ebe5e"/><rect x="679.6" y="858.0" width="27.3" height="21.4" fill="#a6a860"/><rect x="706.3" y="858.0" width="27.3" height="21.4" fill="#864c2e"/><rect x="732.9" y="858.0" width="27.3" height="21.4" fill="#864c2e"/><rect x="759.6" y="858.0" width="27.3" height="21.4" fill="#864c2e"/><rect x="786.2" y="858.0" width="27.3" height="21.4" fill="#864c2e"/><rect x="812.9" y="858.0" width="27.3" height="21.4" fill="#864c2e"/><rect x="839.6" y="858.0" width="27.3" height="21.4" fill="#864c2e"/><rect x="866.2" y="858.0" width="27.3" height="21.4" fill="#864c2e"/><rect x="892.9" y="858.0" width="27.3" height="21.4" fill="#864c2e"/><rect x="919.5" y="858.0" width="27.3" height="21.4" fill="#864c2e"/><rect x="946.2" y="858.0" width="27.3" height="21.4" fill="#3a4c56"/><rect x="972.8" y="858.0" width="27.3" height="21.4" fill="#3a4c56"/><rect x="999.5" y="858.0" width="27.3" height="21.4" fill="#4e4c3e"/><rect x="1026.2" y="858.0" width="27.3" height="21.4" fill="#3a4c56"/><rect x="1052.8" y="858.0" width="27.3" height="21.4" fill="#3a4c56"/><rect x="1079.5" y="858.0" width="27.3" height="21.4" fill="#3a4c56"/><rect x="1106.1" y="858.0" width="27.3" height="21.4" fill="#4e4c3e"/><rect x="1132.8" y="858.0" width="27.3" height="21.4" fill="#4e4c3e"/><rect x="1159.4" y="858.0" width="27.3" height="21.4" fill="#3a4c56"/><rect x="1186.1" y="858.0" width="27.3" height="21.4" fill="#4e4c3e"/><rect x="1212.8" y="858.0" width="27.3" height="21.4" fill="#3a4c56"/><rect x="1239.4" y="858.0" width="27.3" height="21.4" fill="#4e4c3e"/><rect x="1266.1" y="858.0" width="27.3" height="21.4" fill="#4e4c3e"/><rect x="1292.7" y="858.0" width="27.3" height="21.4" fill="#3a4c56"/><rect x="1319.4" y="858.0" width="27.3" height="21.4" fill="#4e4c3e"/><rect x="1346.0" y="858.0" width="27.3" height="21.4" fill="#3a4c56"/><rect x="1372.7" y="858.0" width="27.3" height="21.4" fill="#4e4c3e"/><rect x="1399.3" y="858.0" width="57.3" height="21.4" fill="#864c2e"/><rect x="543.0" y="878.8" width="57.3" height="21.4" fill="#d08c4a"/><rect x="599.7" y="878.8" width="27.3" height="21.4" fill="#a6a860"/><rect x="626.3" y="878.8" width="27.3" height="21.4" fill="#8ebe5e"/><rect x="653.0" y="878.8" width="27.3" height="21.4" fill="#a6a860"/><rect x="679.6" y="878.8" width="27.3" height="21.4" fill="#a6a860"/><rect x="706.3" y="878.8" width="27.3" height="21.4" fill="#864c2e"/><rect x="732.9" y="878.8" width="27.3" height="21.4" fill="#864c2e"/><rect x="759.6" y="878.8" width="27.3" height="21.4" fill="#864c2e"/><rect x="786.2" y="878.8" width="27.3" height="21.4" fill="#864c2e"/><rect x="812.9" y="878.8" width="27.3" height="21.4" fill="#864c2e"/><rect x="839.6" y="878.8" width="27.3" height="21.4" fill="#864c2e"/><rect x="866.2" y="878.8" width="27.3" height="21.4" fill="#4e4c3e"/><rect x="892.9" y="878.8" width="27.3" height="21.4" fill="#3a4c56"/><rect x="919.5" y="878.8" width="27.3" height="21.4" fill="#3a4c56"/><rect x="946.2" y="878.8" width="27.3" height="21.4" fill="#3a4c56"/><rect x="972.8" y="878.8" width="27.3" height="21.4" fill="#3a4c56"/><rect x="999.5" y="878.8" width="27.3" height="21.4" fill="#4e4c3e"/><rect x="1026.2" y="878.8" width="27.3" height="21.4" fill="#3a4c56"/><rect x="1052.8" y="878.8" width="27.3" height="21.4" fill="#3a4c56"/><rect x="1079.5" y="878.8" width="27.3" height="21.4" fill="#3a4c56"/><rect x="1106.1" y="878.8" width="27.3" height="21.4" fill="#4e4c3e"/><rect x="1132.8" y="878.8" width="27.3" height="21.4" fill="#3a4c56"/><rect x="1159.4" y="878.8" width="27.3" height="21.4" fill="#4e4c3e"/><rect x="1186.1" y="878.8" width="27.3" height="21.4" fill="#4e4c3e"/><rect x="1212.8" y="878.8" width="27.3" height="21.4" fill="#4e4c3e"/><rect x="1239.4" y="878.8" width="27.3" height="21.4" fill="#3a4c56"/><rect x="1266.1" y="878.8" width="27.3" height="21.4" fill="#3a4c56"/><rect x="1292.7" y="878.8" width="27.3" height="21.4" fill="#3a4c56"/><rect x="1319.4" y="878.8" width="27.3" height="21.4" fill="#4e4c3e"/><rect x="1346.0" y="878.8" width="27.3" height="21.4" fill="#864c2e"/><rect x="1372.7" y="878.8" width="27.3" height="21.4" fill="#864c2e"/><rect x="1399.3" y="878.8" width="57.3" height="21.4" fill="#864c2e"/><rect x="543.0" y="899.5" width="57.3" height="21.4" fill="#4e4c3e"/><rect x="599.7" y="899.5" width="27.3" height="21.4" fill="#a6a860"/><rect x="626.3" y="899.5" width="27.3" height="21.4" fill="#8ebe5e"/><rect x="653.0" y="899.5" width="27.3" height="21.4" fill="#8ebe5e"/><rect x="679.6" y="899.5" width="27.3" height="21.4" fill="#a6a860"/><rect x="706.3" y="899.5" width="27.3" height="21.4" fill="#864c2e"/><rect x="732.9" y="899.5" width="27.3" height="21.4" fill="#864c2e"/><rect x="759.6" y="899.5" width="27.3" height="21.4" fill="#864c2e"/><rect x="786.2" y="899.5" width="27.3" height="21.4" fill="#864c2e"/><rect x="812.9" y="899.5" width="27.3" height="21.4" fill="#864c2e"/><rect x="839.6" y="899.5" width="27.3" height="21.4" fill="#864c2e"/><rect x="866.2" y="899.5" width="27.3" height="21.4" fill="#4e4c3e"/><rect x="892.9" y="899.5" width="27.3" height="21.4" fill="#3a4c56"/><rect x="919.5" y="899.5" width="27.3" height="21.4" fill="#4e4c3e"/><rect x="946.2" y="899.5" width="27.3" height="21.4" fill="#3a4c56"/><rect x="972.8" y="899.5" width="27.3" height="21.4" fill="#3a4c56"/><rect x="999.5" y="899.5" width="27.3" height="21.4" fill="#4e4c3e"/><rect x="1026.2" y="899.5" width="27.3" height="21.4" fill="#4e4c3e"/><rect x="1052.8" y="899.5" width="27.3" height="21.4" fill="#3a4c56"/><rect x="1079.5" y="899.5" width="27.3" height="21.4" fill="#3a4c56"/><rect x="1106.1" y="899.5" width="27.3" height="21.4" fill="#4e4c3e"/><rect x="1132.8" y="899.5" width="27.3" height="21.4" fill="#4e4c3e"/><rect x="1159.4" y="899.5" width="27.3" height="21.4" fill="#4e4c3e"/><rect x="1186.1" y="899.5" width="27.3" height="21.4" fill="#4e4c3e"/><rect x="1212.8" y="899.5" width="27.3" height="21.4" fill="#3a4c56"/><rect x="1239.4" y="899.5" width="27.3" height="21.4" fill="#3a4c56"/><rect x="1266.1" y="899.5" width="27.3" height="21.4" fill="#4e4c3e"/><rect x="1292.7" y="899.5" width="27.3" height="21.4" fill="#3a4c56"/><rect x="1319.4" y="899.5" width="27.3" height="21.4" fill="#864c2e"/><rect x="1346.0" y="899.5" width="27.3" height="21.4" fill="#864c2e"/><rect x="1372.7" y="899.5" width="27.3" height="21.4" fill="#864c2e"/><rect x="1399.3" y="899.5" width="57.3" height="21.4" fill="#864c2e"/><rect x="543.0" y="920.2" width="57.3" height="51.4" fill="#a6a860"/><rect x="599.7" y="920.2" width="27.3" height="51.4" fill="#a6a860"/><rect x="626.3" y="920.2" width="27.3" height="51.4" fill="#a6a860"/><rect x="653.0" y="920.2" width="27.3" height="51.4" fill="#4e4c3e"/><rect x="679.6" y="920.2" width="27.3" height="51.4" fill="#864c2e"/><rect x="706.3" y="920.2" width="27.3" height="51.4" fill="#864c2e"/><rect x="732.9" y="920.2" width="27.3" height="51.4" fill="#864c2e"/><rect x="759.6" y="920.2" width="27.3" height="51.4" fill="#864c2e"/><rect x="786.2" y="920.2" width="27.3" height="51.4" fill="#864c2e"/><rect x="812.9" y="920.2" width="27.3" height="51.4" fill="#864c2e"/><rect x="839.6" y="920.2" width="27.3" height="51.4" fill="#864c2e"/><rect x="866.2" y="920.2" width="27.3" height="51.4" fill="#4e4c3e"/><rect x="892.9" y="920.2" width="27.3" height="51.4" fill="#3a4c56"/><rect x="919.5" y="920.2" width="27.3" height="51.4" fill="#3a4c56"/><rect x="946.2" y="920.2" width="27.3" height="51.4" fill="#3a4c56"/><rect x="972.8" y="920.2" width="27.3" height="51.4" fill="#3a4c56"/><rect x="999.5" y="920.2" width="27.3" height="51.4" fill="#5a8646"/><rect x="1026.2" y="920.2" width="27.3" height="51.4" fill="#4e4c3e"/><rect x="1052.8" y="920.2" width="27.3" height="51.4" fill="#a6a860"/><rect x="1079.5" y="920.2" width="27.3" height="51.4" fill="#3a4c56"/><rect x="1106.1" y="920.2" width="27.3" height="51.4" fill="#4e4c3e"/><rect x="1132.8" y="920.2" width="27.3" height="51.4" fill="#d08c4a"/><rect x="1159.4" y="920.2" width="27.3" height="51.4" fill="#d08c4a"/><rect x="1186.1" y="920.2" width="27.3" height="51.4" fill="#a6a860"/><rect x="1212.8" y="920.2" width="27.3" height="51.4" fill="#3a4c56"/><rect x="1239.4" y="920.2" width="27.3" height="51.4" fill="#3a4c56"/><rect x="1266.1" y="920.2" width="27.3" height="51.4" fill="#4e4c3e"/><rect x="1292.7" y="920.2" width="27.3" height="51.4" fill="#3a4c56"/><rect x="1319.4" y="920.2" width="27.3" height="51.4" fill="#864c2e"/><rect x="1346.0" y="920.2" width="27.3" height="51.4" fill="#864c2e"/><rect x="1372.7" y="920.2" width="27.3" height="51.4" fill="#864c2e"/><rect x="1399.3" y="920.2" width="57.3" height="51.4" fill="#4e4c3e"/></g><g filter="url(#sb)"><rect x="650.1" y="611.3" width="15.3" height="8.0" fill="#f49a40" opacity="0.85" transform="rotate(10 657.8 615.3)"/><rect x="636.7" y="610.2" width="16.0" height="6.8" fill="#8ccc60" opacity="0.85" transform="rotate(0 644.7 613.6)"/><rect x="630.2" y="635.8" width="10.8" height="7.2" fill="#e8883a" opacity="0.85" transform="rotate(-35 635.6 639.4)"/><rect x="595.5" y="626.1" width="20.7" height="13.7" fill="#e8883a" opacity="0.85" transform="rotate(-35 605.9 632.9)"/><rect x="617.5" y="612.9" width="10.4" height="17.3" fill="#70b098" opacity="0.85" transform="rotate(-35 622.7 621.6)"/><rect x="599.3" y="625.3" width="19.5" height="15.0" fill="#70b098" opacity="0.85" transform="rotate(-20 609.0 632.8)"/><rect x="643.2" y="626.5" width="11.3" height="15.4" fill="#8ccc60" opacity="0.85" transform="rotate(0 648.9 634.2)"/><rect x="671.6" y="619.8" width="23.3" height="12.1" fill="#e8883a" opacity="0.85" transform="rotate(-20 683.2 625.9)"/><rect x="641.2" y="625.5" width="21.9" height="9.2" fill="#8ccc60" opacity="0.85" transform="rotate(-10 652.1 630.1)"/><rect x="600.9" y="620.1" width="14.7" height="18.9" fill="#e8883a" opacity="0.85" transform="rotate(-10 608.3 629.6)"/><rect x="673.7" y="611.3" width="26.0" height="11.6" fill="#70b098" opacity="0.85" transform="rotate(10 686.7 617.1)"/><rect x="635.8" y="633.5" width="15.6" height="10.6" fill="#f49a40" opacity="0.85" transform="rotate(-35 643.6 638.8)"/><rect x="647.7" y="610.8" width="26.2" height="12.3" fill="#70b098" opacity="0.85" transform="rotate(25 660.8 616.9)"/><rect x="663.6" y="616.5" width="21.0" height="19.1" fill="#70b098" opacity="0.85" transform="rotate(0 674.1 626.1)"/><rect x="606.0" y="612.5" width="10.0" height="12.1" fill="#e8883a" opacity="0.85" transform="rotate(-35 611.0 618.6)"/><rect x="611.9" y="621.6" width="23.1" height="7.7" fill="#f49a40" opacity="0.85" transform="rotate(0 623.5 625.4)"/><rect x="616.0" y="613.2" width="12.5" height="11.3" fill="#70b098" opacity="0.85" transform="rotate(0 622.3 618.8)"/><rect x="650.8" y="619.1" width="22.0" height="19.0" fill="#e8883a" opacity="0.85" transform="rotate(-20 661.8 628.6)"/><rect x="590.5" y="643.6" width="10.8" height="7.6" fill="#f0a050" opacity="0.85" transform="rotate(10 595.9 647.5)"/><rect x="583.6" y="662.9" width="13.3" height="6.0" fill="#e07a50" opacity="0.85" transform="rotate(10 590.3 666.0)"/><rect x="583.5" y="674.0" width="23.1" height="13.5" fill="#8ab0a0" opacity="0.85" transform="rotate(25 595.1 680.8)"/><rect x="593.9" y="686.0" width="10.4" height="15.7" fill="#e07a50" opacity="0.85" transform="rotate(10 599.1 693.8)"/><rect x="584.7" y="663.8" width="15.3" height="10.3" fill="#f0a050" opacity="0.85" transform="rotate(-20 592.4 668.9)"/><rect x="575.2" y="674.0" width="23.6" height="10.8" fill="#f0a050" opacity="0.85" transform="rotate(-35 587.0 679.4)"/><rect x="595.0" y="674.4" width="17.6" height="11.8" fill="#f0a050" opacity="0.85" transform="rotate(-35 603.8 680.3)"/><rect x="578.8" y="661.5" width="18.3" height="7.6" fill="#e07a50" opacity="0.85" transform="rotate(-10 587.9 665.3)"/><rect x="688.9" y="670.0" width="11.3" height="15.2" fill="#d0d060" opacity="0.85" transform="rotate(0 694.6 677.6)"/><rect x="650.4" y="658.1" width="10.8" height="7.1" fill="#a0d070" opacity="0.85" transform="rotate(25 655.8 661.7)"/><rect x="683.8" y="664.6" width="16.9" height="8.2" fill="#f0a050" opacity="0.85" transform="rotate(25 692.3 668.7)"/><rect x="665.2" y="646.1" width="20.4" height="9.2" fill="#d0d060" opacity="0.85" transform="rotate(-10 675.4 650.7)"/><rect x="642.0" y="676.3" width="22.5" height="9.8" fill="#d0d060" opacity="0.85" transform="rotate(10 653.2 681.2)"/><rect x="673.9" y="689.8" width="18.6" height="12.6" fill="#a0d070" opacity="0.85" transform="rotate(-20 683.2 696.1)"/><rect x="642.3" y="673.6" width="21.2" height="14.0" fill="#f0a050" opacity="0.85" transform="rotate(-10 652.9 680.6)"/><rect x="655.1" y="652.5" width="23.7" height="14.5" fill="#d0d060" opacity="0.85" transform="rotate(10 666.9 659.8)"/><rect x="686.3" y="701.1" width="16.0" height="16.1" fill="#f0a050" opacity="0.85" transform="rotate(-10 694.3 709.1)"/><rect x="641.5" y="653.9" width="12.7" height="8.4" fill="#f0a050" opacity="0.85" transform="rotate(10 647.9 658.1)"/><rect x="675.4" y="645.6" width="16.4" height="13.1" fill="#f0a050" opacity="0.85" transform="rotate(25 683.6 652.1)"/><rect x="670.3" y="671.0" width="22.5" height="14.4" fill="#70b080" opacity="0.85" transform="rotate(-20 681.6 678.2)"/><rect x="673.7" y="705.3" width="20.8" height="9.6" fill="#70b080" opacity="0.85" transform="rotate(0 684.1 710.1)"/><rect x="671.6" y="650.9" width="15.3" height="16.2" fill="#f0a050" opacity="0.85" transform="rotate(-20 679.2 659.0)"/><rect x="677.7" y="649.4" width="11.7" height="15.8" fill="#70b080" opacity="0.85" transform="rotate(10 683.6 657.3)"/><rect x="660.5" y="648.8" width="18.9" height="9.8" fill="#f0a050" opacity="0.85" transform="rotate(-35 669.9 653.7)"/><rect x="598.4" y="759.1" width="17.1" height="16.1" fill="#f0a050" opacity="0.85" transform="rotate(-20 606.9 767.1)"/><rect x="587.5" y="750.3" width="13.2" height="9.2" fill="#e8904a" opacity="0.85" transform="rotate(-10 594.1 754.9)"/><rect x="626.9" y="741.0" width="15.5" height="7.4" fill="#e8904a" opacity="0.85" transform="rotate(0 634.7 744.7)"/><rect x="597.4" y="761.0" width="17.9" height="15.8" fill="#f0a050" opacity="0.85" transform="rotate(10 606.4 768.9)"/><rect x="574.1" y="743.7" width="17.2" height="11.7" fill="#e8904a" opacity="0.85" transform="rotate(-20 582.7 749.5)"/><rect x="583.7" y="744.3" width="9.7" height="14.6" fill="#f0a050" opacity="0.85" transform="rotate(25 588.5 751.6)"/><rect x="603.2" y="748.9" width="17.5" height="9.5" fill="#e8904a" opacity="0.85" transform="rotate(-35 611.9 753.7)"/><rect x="575.6" y="730.1" width="10.4" height="8.1" fill="#e8904a" opacity="0.85" transform="rotate(0 580.8 734.1)"/><rect x="576.9" y="738.4" width="10.0" height="15.7" fill="#e8904a" opacity="0.85" transform="rotate(10 581.9 746.3)"/><rect x="599.5" y="746.9" width="16.9" height="13.5" fill="#e8904a" opacity="0.85" transform="rotate(0 607.9 753.7)"/><rect x="621.7" y="763.0" width="23.0" height="13.6" fill="#e8904a" opacity="0.85" transform="rotate(-10 633.1 769.7)"/><rect x="598.0" y="743.5" width="22.3" height="8.2" fill="#80b0b0" opacity="0.85" transform="rotate(0 609.1 747.6)"/><rect x="586.9" y="781.5" width="13.0" height="11.6" fill="#f0a050" opacity="0.85" transform="rotate(-10 593.4 787.3)"/><rect x="594.0" y="798.7" width="19.3" height="7.3" fill="#e08850" opacity="0.85" transform="rotate(-20 603.7 802.3)"/><rect x="579.5" y="806.3" width="19.1" height="14.1" fill="#e08850" opacity="0.85" transform="rotate(0 589.0 813.4)"/><rect x="580.5" y="798.9" width="11.4" height="11.6" fill="#e08850" opacity="0.85" transform="rotate(10 586.1 804.7)"/><rect x="583.3" y="800.8" width="13.3" height="7.6" fill="#e08850" opacity="0.85" transform="rotate(-35 589.9 804.7)"/><rect x="573.6" y="786.0" width="15.6" height="9.7" fill="#e08850" opacity="0.85" transform="rotate(10 581.4 790.8)"/><rect x="604.0" y="803.7" width="15.1" height="6.5" fill="#f0a050" opacity="0.85" transform="rotate(-35 611.5 807.0)"/><rect x="598.5" y="784.2" width="12.5" height="6.3" fill="#e08850" opacity="0.85" transform="rotate(-20 604.8 787.4)"/><rect x="844.1" y="755.1" width="24.8" height="15.2" fill="#b8d060" opacity="0.85" transform="rotate(10 856.5 762.8)"/><rect x="785.8" y="775.8" width="22.4" height="8.1" fill="#f4a048" opacity="0.85" transform="rotate(0 797.0 779.8)"/><rect x="788.2" y="746.8" width="15.5" height="7.2" fill="#f0a050" opacity="0.85" transform="rotate(10 796.0 750.4)"/><rect x="814.6" y="750.4" width="12.3" height="17.5" fill="#b8d060" opacity="0.85" transform="rotate(10 820.7 759.2)"/><rect x="790.4" y="764.2" width="26.0" height="10.3" fill="#f4a048" opacity="0.85" transform="rotate(-20 803.4 769.4)"/><rect x="793.7" y="791.4" width="26.7" height="10.2" fill="#e89048" opacity="0.85" transform="rotate(25 807.1 796.5)"/><rect x="812.4" y="774.2" width="19.7" height="9.5" fill="#e89048" opacity="0.85" transform="rotate(-10 822.2 779.0)"/><rect x="784.4" y="730.2" width="24.1" height="19.1" fill="#f0a050" opacity="0.85" transform="rotate(10 796.5 739.7)"/><rect x="812.5" y="773.1" width="19.4" height="10.0" fill="#b8d060" opacity="0.85" transform="rotate(25 822.2 778.1)"/><rect x="841.7" y="792.2" width="21.7" height="13.7" fill="#f0a050" opacity="0.85" transform="rotate(-10 852.5 799.1)"/><rect x="835.7" y="775.9" width="26.9" height="11.2" fill="#f0a050" opacity="0.85" transform="rotate(25 849.2 781.5)"/><rect x="785.8" y="737.6" width="17.7" height="11.2" fill="#e89048" opacity="0.85" transform="rotate(-35 794.6 743.2)"/><rect x="827.9" y="755.0" width="18.1" height="7.7" fill="#e89048" opacity="0.85" transform="rotate(10 836.9 758.8)"/><rect x="785.1" y="740.9" width="20.8" height="15.5" fill="#b8d060" opacity="0.85" transform="rotate(-10 795.4 748.6)"/><rect x="805.8" y="794.3" width="11.3" height="11.4" fill="#f0a050" opacity="0.85" transform="rotate(-10 811.4 800.0)"/><rect x="797.7" y="740.5" width="11.8" height="17.8" fill="#b8d060" opacity="0.85" transform="rotate(-10 803.6 749.4)"/><rect x="787.6" y="674.3" width="10.8" height="9.0" fill="#d8d860" opacity="0.85" transform="rotate(-35 793.0 678.8)"/><rect x="759.5" y="662.4" width="13.4" height="7.0" fill="#f0a050" opacity="0.85" transform="rotate(-35 766.2 665.9)"/><rect x="779.1" y="690.6" width="13.9" height="8.5" fill="#90c060" opacity="0.85" transform="rotate(-20 786.1 694.8)"/><rect x="767.8" y="675.7" width="20.5" height="13.8" fill="#b0d868" opacity="0.85" transform="rotate(10 778.0 682.6)"/><rect x="813.2" y="694.2" width="10.2" height="15.0" fill="#b0d868" opacity="0.85" transform="rotate(25 818.3 701.7)"/><rect x="774.8" y="704.7" width="22.5" height="14.1" fill="#b0d868" opacity="0.85" transform="rotate(-35 786.1 711.7)"/><rect x="785.6" y="716.4" width="10.8" height="6.5" fill="#90c060" opacity="0.85" transform="rotate(0 791.0 719.6)"/><rect x="782.3" y="697.9" width="17.5" height="12.8" fill="#f0a050" opacity="0.85" transform="rotate(0 791.0 704.2)"/><rect x="797.9" y="687.5" width="9.6" height="14.6" fill="#d8d860" opacity="0.85" transform="rotate(10 802.8 694.8)"/><rect x="793.3" y="674.8" width="19.0" height="6.7" fill="#f0a050" opacity="0.85" transform="rotate(-35 802.8 678.1)"/><rect x="741.6" y="695.7" width="12.9" height="14.2" fill="#90c060" opacity="0.85" transform="rotate(0 748.0 702.8)"/><rect x="810.0" y="676.8" width="21.6" height="6.8" fill="#b0d868" opacity="0.85" transform="rotate(-35 820.8 680.2)"/><rect x="744.3" y="703.3" width="10.7" height="7.6" fill="#b0d868" opacity="0.85" transform="rotate(-10 749.7 707.1)"/><rect x="746.1" y="699.4" width="9.8" height="6.7" fill="#b0d868" opacity="0.85" transform="rotate(25 750.9 702.8)"/><rect x="770.4" y="686.7" width="19.2" height="9.1" fill="#d8d860" opacity="0.85" transform="rotate(0 780.0 691.3)"/><rect x="748.5" y="664.8" width="23.7" height="11.9" fill="#d8d860" opacity="0.85" transform="rotate(0 760.4 670.8)"/><rect x="770.8" y="718.3" width="13.7" height="6.8" fill="#90c060" opacity="0.85" transform="rotate(-10 777.6 721.7)"/><rect x="739.5" y="691.3" width="12.6" height="16.2" fill="#f0a050" opacity="0.85" transform="rotate(-20 745.8 699.4)"/><rect x="716.0" y="890.4" width="23.1" height="7.4" fill="#e8e070" opacity="0.85" transform="rotate(-35 727.5 894.2)"/><rect x="723.5" y="885.7" width="14.8" height="11.4" fill="#f0a050" opacity="0.85" transform="rotate(-20 730.9 891.4)"/><rect x="687.2" y="895.8" width="23.1" height="13.4" fill="#a0d070" opacity="0.85" transform="rotate(0 698.7 902.5)"/><rect x="683.4" y="884.1" width="14.9" height="7.3" fill="#a0d070" opacity="0.85" transform="rotate(-10 690.8 887.8)"/><rect x="712.7" y="900.0" width="11.3" height="16.0" fill="#a0d070" opacity="0.85" transform="rotate(-10 718.4 908.0)"/><rect x="732.5" y="892.4" width="14.9" height="10.2" fill="#a0d070" opacity="0.85" transform="rotate(-10 739.9 897.5)"/><rect x="678.9" y="874.6" width="20.3" height="15.2" fill="#a0d070" opacity="0.85" transform="rotate(25 689.0 882.2)"/><rect x="728.6" y="887.9" width="18.6" height="7.6" fill="#f0a050" opacity="0.85" transform="rotate(-10 737.9 891.7)"/><rect x="689.2" y="873.9" width="20.6" height="14.5" fill="#a0d070" opacity="0.85" transform="rotate(25 699.5 881.1)"/><rect x="697.3" y="894.5" width="22.6" height="16.2" fill="#e8e070" opacity="0.85" transform="rotate(-35 708.6 902.6)"/><rect x="669.2" y="900.5" width="15.4" height="12.6" fill="#f0a050" opacity="0.85" transform="rotate(0 676.9 906.9)"/><rect x="670.9" y="886.3" width="22.5" height="11.9" fill="#a0d070" opacity="0.85" transform="rotate(-10 682.2 892.3)"/><rect x="649.2" y="825.0" width="12.4" height="12.2" fill="#a0c070" opacity="0.85" transform="rotate(-20 655.3 831.1)"/><rect x="634.2" y="832.7" width="14.8" height="11.6" fill="#f0a050" opacity="0.85" transform="rotate(-35 641.6 838.5)"/><rect x="645.6" y="826.3" width="15.0" height="12.8" fill="#a0c070" opacity="0.85" transform="rotate(-10 653.1 832.7)"/><rect x="637.6" y="817.7" width="14.2" height="10.6" fill="#f0a050" opacity="0.85" transform="rotate(10 644.7 823.0)"/><rect x="653.2" y="818.8" width="13.0" height="9.1" fill="#a0c070" opacity="0.85" transform="rotate(-35 659.8 823.3)"/><rect x="636.7" y="820.6" width="13.7" height="12.3" fill="#a0c070" opacity="0.85" transform="rotate(-35 643.6 826.7)"/><rect x="576.9" y="864.1" width="12.6" height="14.1" fill="#e8904a" opacity="0.85" transform="rotate(25 583.2 871.2)"/><rect x="585.2" y="871.1" width="10.6" height="13.5" fill="#80c070" opacity="0.85" transform="rotate(0 590.5 877.9)"/><rect x="573.6" y="841.6" width="18.8" height="13.3" fill="#80c070" opacity="0.85" transform="rotate(25 583.0 848.2)"/><rect x="575.0" y="886.5" width="20.1" height="10.1" fill="#80c070" opacity="0.85" transform="rotate(10 585.0 891.5)"/><rect x="575.9" y="847.9" width="20.1" height="8.1" fill="#90a0a0" opacity="0.85" transform="rotate(10 586.0 851.9)"/><rect x="595.2" y="881.1" width="10.8" height="12.9" fill="#e8904a" opacity="0.85" transform="rotate(0 600.5 887.6)"/><rect x="595.9" y="852.1" width="15.6" height="6.3" fill="#90a0a0" opacity="0.85" transform="rotate(-35 603.6 855.2)"/><rect x="590.8" y="865.3" width="17.3" height="14.1" fill="#90a0a0" opacity="0.85" transform="rotate(0 599.4 872.4)"/><rect x="982.2" y="662.5" width="32.3" height="11.6" fill="#b0e880" opacity="0.85" transform="rotate(-20 998.3 668.4)"/><rect x="966.1" y="647.6" width="21.6" height="23.0" fill="#b0e880" opacity="0.85" transform="rotate(0 976.9 659.1)"/><rect x="1011.7" y="646.7" width="36.5" height="20.6" fill="#90e070" opacity="0.85" transform="rotate(-20 1030.0 657.0)"/><rect x="1006.1" y="636.5" width="16.6" height="16.8" fill="#b0e880" opacity="0.85" transform="rotate(-20 1014.4 644.8)"/><rect x="970.3" y="640.6" width="34.9" height="20.6" fill="#b0e880" opacity="0.85" transform="rotate(0 987.7 650.9)"/><rect x="986.1" y="647.5" width="20.9" height="10.6" fill="#b0e880" opacity="0.85" transform="rotate(25 996.6 652.8)"/><rect x="1394.8" y="656.8" width="13.1" height="16.5" fill="#a0d070" opacity="0.85" transform="rotate(-20 1401.4 665.1)"/><rect x="1396.9" y="631.6" width="26.7" height="10.1" fill="#80a0c0" opacity="0.85" transform="rotate(-20 1410.2 636.7)"/><rect x="1410.2" y="657.6" width="23.0" height="9.9" fill="#f0a050" opacity="0.85" transform="rotate(-20 1421.7 662.6)"/><rect x="1330.2" y="664.9" width="18.1" height="18.0" fill="#f4a048" opacity="0.85" transform="rotate(0 1339.3 673.9)"/><rect x="1338.4" y="613.9" width="13.3" height="18.9" fill="#f0a050" opacity="0.85" transform="rotate(-35 1345.1 623.3)"/><rect x="1406.9" y="677.9" width="16.5" height="17.9" fill="#f0a050" opacity="0.85" transform="rotate(-35 1415.2 686.9)"/><rect x="1412.3" y="682.7" width="15.4" height="8.4" fill="#80a0c0" opacity="0.85" transform="rotate(-35 1420.0 686.9)"/><rect x="1358.8" y="641.3" width="21.3" height="11.0" fill="#f4a048" opacity="0.85" transform="rotate(-20 1369.4 646.8)"/><rect x="1358.8" y="702.8" width="9.7" height="9.7" fill="#e08060" opacity="0.85" transform="rotate(-35 1363.6 707.6)"/><rect x="1356.3" y="690.0" width="26.6" height="8.7" fill="#f4a048" opacity="0.85" transform="rotate(0 1369.6 694.4)"/><rect x="1360.7" y="698.1" width="10.5" height="12.2" fill="#80a0c0" opacity="0.85" transform="rotate(-20 1365.9 704.2)"/><rect x="1327.8" y="647.6" width="16.0" height="17.8" fill="#a0d070" opacity="0.85" transform="rotate(25 1335.8 656.6)"/><rect x="1331.0" y="700.8" width="10.3" height="6.5" fill="#f0a050" opacity="0.85" transform="rotate(-10 1336.2 704.0)"/><rect x="1355.4" y="634.6" width="22.8" height="17.9" fill="#f4a048" opacity="0.85" transform="rotate(10 1366.8 643.5)"/><rect x="1354.7" y="635.3" width="14.2" height="15.5" fill="#f8f8f0" opacity="0.85" transform="rotate(-35 1361.8 643.0)"/><rect x="1381.8" y="697.6" width="22.9" height="18.1" fill="#f0a050" opacity="0.85" transform="rotate(-35 1393.2 706.7)"/><rect x="1369.4" y="683.0" width="11.5" height="15.4" fill="#a0d070" opacity="0.85" transform="rotate(-10 1375.1 690.7)"/><rect x="1369.2" y="609.9" width="23.9" height="7.8" fill="#80a0c0" opacity="0.85" transform="rotate(25 1381.2 613.7)"/><rect x="1379.0" y="640.1" width="24.1" height="16.2" fill="#a0d070" opacity="0.85" transform="rotate(-10 1391.1 648.2)"/><rect x="1332.3" y="627.7" width="16.0" height="16.3" fill="#f0a050" opacity="0.85" transform="rotate(-20 1340.3 635.9)"/><rect x="1369.6" y="661.1" width="16.8" height="14.6" fill="#a0d070" opacity="0.85" transform="rotate(-20 1378.0 668.4)"/><rect x="1348.4" y="616.9" width="25.1" height="19.0" fill="#a0d070" opacity="0.85" transform="rotate(-35 1361.0 626.4)"/><rect x="1366.0" y="631.3" width="18.4" height="15.4" fill="#a0d070" opacity="0.85" transform="rotate(0 1375.2 639.0)"/><rect x="1392.9" y="689.9" width="20.5" height="14.9" fill="#f4a048" opacity="0.85" transform="rotate(25 1403.1 697.4)"/><rect x="1350.0" y="635.2" width="23.3" height="9.9" fill="#f8f8f0" opacity="0.85" transform="rotate(-10 1361.6 640.2)"/><rect x="1342.4" y="631.9" width="14.2" height="11.8" fill="#e08060" opacity="0.85" transform="rotate(-10 1349.5 637.8)"/><rect x="1348.8" y="633.5" width="12.9" height="6.9" fill="#f0a050" opacity="0.85" transform="rotate(10 1355.2 636.9)"/><rect x="1367.0" y="612.7" width="21.0" height="7.3" fill="#a0d070" opacity="0.85" transform="rotate(-35 1377.5 616.3)"/><rect x="1364.6" y="645.8" width="25.1" height="9.1" fill="#f0a050" opacity="0.85" transform="rotate(-10 1377.2 650.3)"/><rect x="1417.6" y="666.6" width="11.7" height="8.5" fill="#80a0c0" opacity="0.85" transform="rotate(-35 1423.4 670.8)"/><rect x="1279.0" y="637.9" width="15.1" height="7.5" fill="#90d070" opacity="0.85" transform="rotate(25 1286.6 641.6)"/><rect x="1282.2" y="616.7" width="10.7" height="11.0" fill="#a8d880" opacity="0.85" transform="rotate(-10 1287.6 622.2)"/><rect x="1241.4" y="631.3" width="11.1" height="7.7" fill="#90d070" opacity="0.85" transform="rotate(25 1247.0 635.1)"/><rect x="1257.1" y="621.9" width="18.4" height="12.9" fill="#a8d880" opacity="0.85" transform="rotate(10 1266.3 628.3)"/><rect x="1268.4" y="627.3" width="10.4" height="6.3" fill="#90d070" opacity="0.85" transform="rotate(0 1273.6 630.4)"/><rect x="1229.7" y="627.8" width="18.2" height="11.6" fill="#90d070" opacity="0.85" transform="rotate(25 1238.8 633.6)"/><rect x="1321.8" y="633.6" width="13.9" height="8.3" fill="#90d070" opacity="0.85" transform="rotate(0 1328.7 637.8)"/><rect x="1252.5" y="623.8" width="13.0" height="10.8" fill="#f0a050" opacity="0.85" transform="rotate(-10 1259.0 629.2)"/><rect x="1235.6" y="609.2" width="11.7" height="12.1" fill="#a8d880" opacity="0.85" transform="rotate(-20 1241.5 615.3)"/><rect x="1277.5" y="622.7" width="10.8" height="6.8" fill="#90d070" opacity="0.85" transform="rotate(-20 1282.9 626.1)"/><rect x="1124.2" y="818.4" width="16.2" height="16.4" fill="#c0e070" opacity="0.85" transform="rotate(-35 1132.3 826.6)"/><rect x="1113.6" y="798.7" width="26.8" height="12.0" fill="#d8e870" opacity="0.85" transform="rotate(-20 1126.9 804.7)"/><rect x="1128.5" y="820.3" width="17.6" height="15.7" fill="#c0e070" opacity="0.85" transform="rotate(-20 1137.3 828.1)"/><rect x="1133.4" y="805.8" width="17.8" height="20.9" fill="#c0e070" opacity="0.85" transform="rotate(-35 1142.3 816.3)"/><rect x="1181.9" y="931.6" width="10.8" height="13.7" fill="#f0a050" opacity="0.85" transform="rotate(25 1187.4 938.5)"/><rect x="1153.4" y="922.2" width="18.4" height="12.6" fill="#f0a050" opacity="0.85" transform="rotate(10 1162.6 928.5)"/><rect x="1151.9" y="918.9" width="10.2" height="16.1" fill="#f0a050" opacity="0.85" transform="rotate(-20 1157.0 926.9)"/><rect x="1152.7" y="931.0" width="23.4" height="14.8" fill="#f0a050" opacity="0.85" transform="rotate(25 1164.4 938.4)"/><rect x="1163.5" y="922.5" width="19.1" height="9.5" fill="#a0d070" opacity="0.85" transform="rotate(25 1173.0 927.3)"/><rect x="1156.1" y="920.9" width="18.8" height="9.3" fill="#a0d070" opacity="0.85" transform="rotate(-10 1165.5 925.5)"/><rect x="1143.2" y="936.7" width="16.8" height="7.9" fill="#f0a050" opacity="0.85" transform="rotate(0 1151.6 940.6)"/><rect x="1187.2" y="930.8" width="15.9" height="12.7" fill="#a0d070" opacity="0.85" transform="rotate(0 1195.2 937.1)"/><rect x="1397.5" y="694.3" width="10.8" height="7.1" fill="#a0d070" opacity="0.85" transform="rotate(0 1402.9 697.8)"/><rect x="1417.8" y="704.6" width="10.0" height="7.1" fill="#a0d070" opacity="0.85" transform="rotate(25 1422.8 708.1)"/><rect x="1395.5" y="732.7" width="10.2" height="10.2" fill="#a0d070" opacity="0.85" transform="rotate(-20 1400.6 737.8)"/><rect x="1406.8" y="724.9" width="18.9" height="14.4" fill="#a0d070" opacity="0.85" transform="rotate(-20 1416.2 732.1)"/><rect x="1414.3" y="731.2" width="20.2" height="10.1" fill="#a0d070" opacity="0.85" transform="rotate(-20 1424.4 736.2)"/><rect x="1410.9" y="697.2" width="10.3" height="8.9" fill="#e8a060" opacity="0.85" transform="rotate(10 1416.0 701.7)"/></g><rect x="573" y="609" width="853" height="332" filter="url(#nz)" opacity="0.4"/><rect x="573" y="609" width="853" height="332" filter="url(#nz2)" opacity="0.45"/><path d="M966 609 L988 609 L979 622 L957 640 L940 648 L931 666 L922 688 L916 685 L922 666 L929 644 L944 631 Z" fill="#020204"/><path d="M916 609 L921 609 L937 640 L933 646 Z" fill="#020204"/><path d="M890 738 L903 740 L895 760 L890 790 L889 814 L880 840 L862 858 L840 868 L815 878 L792 892 L772 906 L765 922 L776 941 L756 941 L750 922 L758 902 L778 886 L804 870 L830 860 L852 850 L868 835 L876 812 L879 785 L884 760 Z" fill="#020204"/><path d="M799 811 L805 815 L798 840 L788 862 L780 882 L774 880 L782 855 L792 832 Z" fill="#020204"/><path d="M729 834 L745 832 L752 845 L748 862 L735 860 L728 848 Z" fill="#020204"/><path d="M684 830 L707 830 L708 857 L684 857 Z" fill="#020204"/><path d="M612 821 L626 834 L622 852 L617 871 L608 890 L596 910 L582 925 L586 941 L573 941 L573 897 L588 895 L600 880 L606 862 L608 840 Z" fill="#020204"/><path d="M1199 765 L1210 767 L1220 785 L1214 790 L1203 780 Z" fill="#020204"/><path d="M1368 888 Q1368 870 1390 868 Q1426 866 1426 868 L1426 905 Q1400 912 1385 905 Q1368 900 1368 888 Z" fill="#020204"/><path d="M868 880 L876 882 L875 904 L867 902 Z" fill="#020204"/><path d="M645 609 C640 630 635 650 625 680 S608 720 606 745 S598 775 573 795" fill="none" stroke="#050505" stroke-width="2" stroke-linejoin="round"/><path d="M573 829 L686 850" fill="none" stroke="#050505" stroke-width="1.5" stroke-linejoin="round"/><path d="M707 858 L727 868 L745 885 L760 905 L772 920" fill="none" stroke="#050505" stroke-width="3.5" stroke-linejoin="round"/><path d="M901 699 Q905 720 906 741" fill="none" stroke="#050505" stroke-width="2" stroke-linejoin="round"/><path d="M1140 739 L1160 753 L1191 774 L1212 787 L1225 808 L1236 829 L1253 849 L1273 851 L1297 853 L1311 863 L1315 883 L1318 904 L1328 925 L1349 935 L1369 941" fill="none" stroke="#050505" stroke-width="3" stroke-linejoin="round"/><path d="M1320 870 L1335 863 L1356 865 L1369 873" fill="none" stroke="#050505" stroke-width="3" stroke-linejoin="round"/><path d="M913 696 L960 712 L1006 724 L1021 722 L1031 723 L1043 728 L1050 733 L1058 724 L1070 729 L1086 729 L1098 729 L1114 725 L1129 729 L1141 740" fill="none" stroke="#050505" stroke-width="1.3" stroke-linejoin="round"/></g><rect x="758" y="743" width="42" height="19" fill="#2e3a28" opacity="0.85"/><path d="M757.5 737 V746" stroke="#e01010" stroke-width="1"/><text x="761" y="758" font-family="Liberation Mono" font-size="12" fill="#e81818" letter-spacing="1">20 km</text><path d="M392 741.5 H1953" stroke="#ff0000" stroke-width="1.4"/><path d="M1087.5 609 V941" stroke="#ff0000" stroke-width="1.4"/><g clip-path="url(#mc)"><circle cx="988" cy="655" r="5.6" fill="#e8101e" stroke="#1a1a1a" stroke-width="0.9"/><circle cx="999" cy="666" r="5.6" fill="#e8101e" stroke="#1a1a1a" stroke-width="0.9"/><circle cx="901" cy="699" r="5.6" fill="#e8101e" stroke="#1a1a1a" stroke-width="0.9"/><circle cx="1106" cy="703" r="5.6" fill="#e8101e" stroke="#1a1a1a" stroke-width="0.9"/><circle cx="1180" cy="711" r="5.6" fill="#e8101e" stroke="#1a1a1a" stroke-width="0.9"/><circle cx="1089" cy="719" r="5.6" fill="#e8101e" stroke="#1a1a1a" stroke-width="0.9"/><circle cx="1111" cy="742" r="5.6" fill="#e8101e" stroke="#1a1a1a" stroke-width="0.9"/><circle cx="1139" cy="738" r="5.6" fill="#e8101e" stroke="#1a1a1a" stroke-width="0.9"/><circle cx="1257" cy="681" r="5.6" fill="#e8101e" stroke="#1a1a1a" stroke-width="0.9"/><circle cx="1242" cy="708" r="5.6" fill="#e8101e" stroke="#1a1a1a" stroke-width="0.9"/><circle cx="1164" cy="786" r="5.6" fill="#e8101e" stroke="#1a1a1a" stroke-width="0.9"/><circle cx="1113" cy="803" r="5.6" fill="#e8101e" stroke="#1a1a1a" stroke-width="0.9"/><circle cx="1066" cy="812" r="5.6" fill="#e8101e" stroke="#1a1a1a" stroke-width="0.9"/><circle cx="1016" cy="822" r="5.6" fill="#e8101e" stroke="#1a1a1a" stroke-width="0.9"/><circle cx="1029" cy="649" r="5.6" fill="#e8f07a" stroke="#1a1a1a" stroke-width="0.9"/><circle cx="1092" cy="731" r="5.6" fill="#e8f07a" stroke="#1a1a1a" stroke-width="0.9"/><circle cx="768" cy="714" r="5.6" fill="#e8f07a" stroke="#1a1a1a" stroke-width="0.9"/><circle cx="842" cy="826" r="5.6" fill="#e8f07a" stroke="#1a1a1a" stroke-width="0.9"/><circle cx="956" cy="867" r="5.6" fill="#e8f07a" stroke="#1a1a1a" stroke-width="0.9"/><circle cx="1193" cy="786" r="5.6" fill="#e8f07a" stroke="#1a1a1a" stroke-width="0.9"/><circle cx="1121" cy="818" r="5.6" fill="#e8f07a" stroke="#1a1a1a" stroke-width="0.9"/><circle cx="1255" cy="885" r="5.6" fill="#e8f07a" stroke="#1a1a1a" stroke-width="0.9"/><circle cx="773" cy="938" r="5.6" fill="#e8f07a" stroke="#1a1a1a" stroke-width="0.9"/><circle cx="1107" cy="623" r="5.6" fill="#14c814" stroke="#1a1a1a" stroke-width="0.9"/><circle cx="740" cy="738" r="5.6" fill="#14c814" stroke="#1a1a1a" stroke-width="0.9"/><circle cx="925" cy="791" r="5.6" fill="#14c814" stroke="#1a1a1a" stroke-width="0.9"/><circle cx="1216" cy="797" r="5.6" fill="#14c814" stroke="#1a1a1a" stroke-width="0.9"/><circle cx="1225" cy="815" r="5.6" fill="#14c814" stroke="#1a1a1a" stroke-width="0.9"/><circle cx="1378" cy="844" r="5.6" fill="#14c814" stroke="#1a1a1a" stroke-width="0.9"/><circle cx="1087" cy="741" r="5.6" fill="#14c814" stroke="#1a1a1a" stroke-width="0.9"/><circle cx="879" cy="610" r="5.6" fill="#0e6e44" stroke="#1a1a1a" stroke-width="0.9"/><circle cx="827" cy="768" r="5.6" fill="#0e6e44" stroke="#1a1a1a" stroke-width="0.9"/><circle cx="963" cy="809" r="5.6" fill="#0e6e44" stroke="#1a1a1a" stroke-width="0.9"/><circle cx="937" cy="835" r="5.6" fill="#0e6e44" stroke="#1a1a1a" stroke-width="0.9"/><circle cx="818" cy="633" r="5.6" fill="#1010f0" stroke="#1a1a1a" stroke-width="0.9"/><circle cx="900" cy="759" r="5.6" fill="#1010f0" stroke="#1a1a1a" stroke-width="0.9"/><circle cx="996" cy="750" r="5.6" fill="#1010f0" stroke="#1a1a1a" stroke-width="0.9"/><circle cx="1196" cy="669" r="5.6" fill="#1010f0" stroke="#1a1a1a" stroke-width="0.9"/><circle cx="688" cy="853" r="5.6" fill="#1010f0" stroke="#1a1a1a" stroke-width="0.9"/><circle cx="789" cy="856" r="5.6" fill="#1010f0" stroke="#1a1a1a" stroke-width="0.9"/><circle cx="1183" cy="842" r="5.6" fill="#1010f0" stroke="#1a1a1a" stroke-width="0.9"/><circle cx="1216" cy="789" r="5.6" fill="#1010f0" stroke="#1a1a1a" stroke-width="0.9"/><circle cx="1389" cy="886" r="5.6" fill="#1010f0" stroke="#1a1a1a" stroke-width="0.9"/><circle cx="1251" cy="939" r="5.6" fill="#1010f0" stroke="#1a1a1a" stroke-width="0.9"/><rect x="1085" y="739" width="4" height="4" fill="none" stroke="#e01010" stroke-width="1"/></g></svg></body></html>
